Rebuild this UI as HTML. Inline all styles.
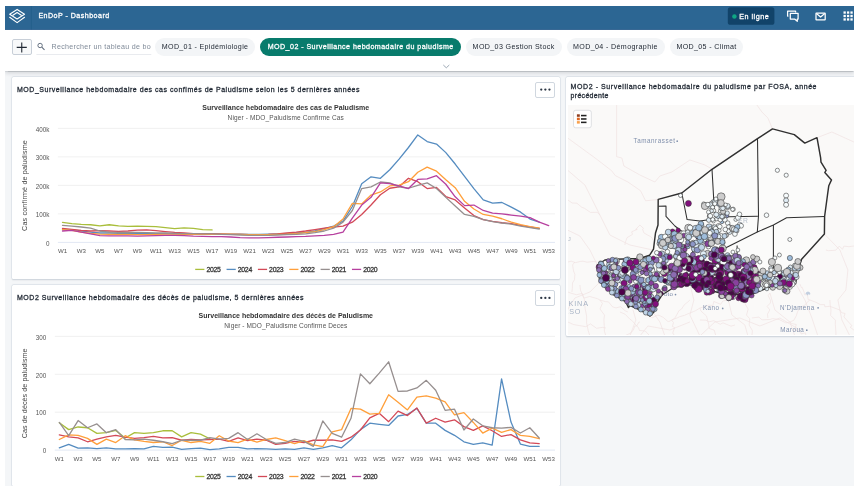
<!DOCTYPE html>
<html><head><meta charset="utf-8"><title>EnDoP - Dashboard</title>
<style>
html,body{margin:0;padding:0;background:#fff;}
body{width:857px;height:496px;overflow:hidden;position:relative;font-family:"Liberation Sans",sans-serif;}
.abs{position:absolute;}
.t{position:absolute;white-space:nowrap;font-family:"Liberation Sans",sans-serif;}
#clip{position:absolute;left:5px;top:5.6px;width:849px;height:480.9px;overflow:hidden;}
#off{position:absolute;left:-5px;top:-5.6px;width:857px;height:496px;will-change:transform;}
#app{position:absolute;left:5px;top:5.6px;width:849px;height:481px;background:#f4f6f8;}
#hdr{position:absolute;left:5px;top:5.6px;width:849px;height:23.9px;background:#2c6693;}
#bar{position:absolute;left:5px;top:29.5px;width:849px;height:41.5px;background:#fff;box-shadow:0 0.5px 1px rgba(33,41,52,.16),0 1.5px 4px rgba(33,41,52,.17);}
.card{position:absolute;background:#fff;border-radius:1.5px;box-shadow:0 0 0 0.5px #d5dde5,0 0.5px 1.5px rgba(64,75,90,.25);}
.chip{position:absolute;top:37.9px;height:18.2px;border-radius:9.1px;background:#f3f5f7;}
.chip.sel{background:#087b6c;}
</style></head><body>
<div id="clip"><div id="off">
<div id="app"></div>

<div class="card" style="left:12.2px;top:77px;width:548.1px;height:201.9px"></div>
<div class="card" style="left:12.2px;top:285px;width:548.1px;height:200.6px"></div>
<div class="card" style="left:565.6px;top:77px;width:292px;height:259.1px"></div>
<div id="bar"></div><div id="hdr"></div>

<svg class="abs" style="left:5px;top:5.6px" width="849" height="24" viewBox="5 5.6 849 24">
 <line x1="31.4" x2="31.4" y1="5.6" y2="29.2" stroke="#1f5a86" stroke-width="0.6"/><rect x="5" y="28.6" width="849" height="0.9" fill="#23598a"/>
 <g fill="none" stroke="#fff" stroke-width="1.15" stroke-linejoin="round" stroke-linecap="round">
  <path d="M17.1 9 L24.5 13.8 L17.1 18.5 L9.7 13.8 Z"/>
  <path d="M12.9 14.9 L17.1 12.1 L21.3 14.9" stroke-width="1.1"/>
  <path d="M9.7 16.9 L17.1 22.2 L24.5 16.9"/>
 </g>
 <rect x="727.8" y="6.8" width="46.6" height="17.6" rx="2.6" fill="#114369"/>
 <circle cx="734.4" cy="16" r="2.25" fill="#10a583"/>
 <g fill="none" stroke="#fff" stroke-width="1.25" stroke-linejoin="round">
  <path d="M788.4 15.6 H787.6 V10.7 H795.6 V12.2"/>
  <path d="M790.3 12.9 H798.1 V18.6 H797.3 V20.9 L794.6 18.6 H790.3 Z"/>
  <rect x="816" y="12.6" width="9.2" height="6.9" rx="0.4"/>
  <path d="M816.4 13.2 L820.6 16.6 L824.8 13.2"/>
 </g>
 <g fill="#fff">
  <rect x="843.50" y="11.00" width="2.3" height="2.3"/><rect x="843.50" y="14.45" width="2.3" height="2.3"/><rect x="843.50" y="17.90" width="2.3" height="2.3"/><rect x="846.95" y="11.00" width="2.3" height="2.3"/><rect x="846.95" y="14.45" width="2.3" height="2.3"/><rect x="846.95" y="17.90" width="2.3" height="2.3"/><rect x="850.40" y="11.00" width="2.3" height="2.3"/><rect x="850.40" y="14.45" width="2.3" height="2.3"/><rect x="850.40" y="17.90" width="2.3" height="2.3"/>
 </g>
</svg>

<div class="t" style="left:38.40px;top:12.34px;font-size:7.1px;line-height:8.52px;letter-spacing:0.464px;color:#fff;-webkit-text-stroke:0.27px #fff;">EnDoP - Dashboard</div>
<div class="t" style="left:739.30px;top:12.58px;font-size:7.2px;line-height:8.64px;letter-spacing:0.485px;color:#fff;-webkit-text-stroke:0.27px #fff;">En ligne</div>

<div class="abs" style="left:11.5px;top:39.1px;width:20px;height:16.4px;box-sizing:border-box;border:0.6px solid #c8cfd8;border-radius:2px;background:#f8f9fa"></div>
<svg class="abs" style="left:5px;top:30px" width="160" height="40" viewBox="5 30 160 40">
 <path d="M16.7 47.4 H26.8 M21.75 42.4 V52.5" stroke="#212934" stroke-width="1.1" fill="none"/>
 <circle cx="40.1" cy="45.5" r="2.2" fill="none" stroke="#5f6b7b" stroke-width="0.95"/>
 <path d="M41.8 47.2 L44.5 49.9" stroke="#5f6b7b" stroke-width="1.05" fill="none"/>
 <line x1="36.4" x2="151.3" y1="54.5" y2="54.5" stroke="#dfe3e8" stroke-width="0.7"/>
</svg>
<div class="abs" style="left:51.5px;top:40px;width:99.8px;height:14px;overflow:hidden"><div class="t" style="left:0;top:3.4px;font-size:7.1px;line-height:8.5px;letter-spacing:0.3px;color:#808b99">Rechercher un tableau de bord</div></div>
<svg class="abs" style="left:440px;top:62px" width="14" height="8" viewBox="440 62 14 8"><path d="M443.3 65 L446.3 67.8 L449.3 65" fill="none" stroke="#8d99a8" stroke-width="0.85"/></svg>

<div class="chip" style="left:154.8px;width:100.3px"></div>
<div class="t" style="left:161.80px;top:42.64px;font-size:7.1px;line-height:8.52px;letter-spacing:0.331px;color:#212934;">MOD_01 - Epidémiologie</div>
<div class="chip sel" style="left:260.2px;width:200.7px"></div>
<div class="t" style="left:267.70px;top:42.64px;font-size:7.1px;line-height:8.52px;letter-spacing:0.450px;color:#fff;-webkit-text-stroke:0.27px #fff;">MOD_02 - Surveillance hebdomadaire du paludisme</div>
<div class="chip" style="left:465.6px;width:96.1px"></div>
<div class="t" style="left:472.60px;top:42.64px;font-size:7.1px;line-height:8.52px;letter-spacing:0.376px;color:#212934;">MOD_03 Gestion Stock</div>
<div class="chip" style="left:566.7px;width:97.9px"></div>
<div class="t" style="left:573.00px;top:42.64px;font-size:7.1px;line-height:8.52px;letter-spacing:0.373px;color:#212934;">MOD_04 - Démographie</div>
<div class="chip" style="left:669.6px;width:73.5px"></div>
<div class="t" style="left:676.40px;top:42.64px;font-size:7.1px;line-height:8.52px;letter-spacing:0.357px;color:#212934;">MOD_05 - Climat</div>
<div class="t" style="left:17.00px;top:86.00px;font-size:7px;line-height:8.40px;letter-spacing:0.524px;color:#212934;-webkit-text-stroke:0.27px #212934;">MOD_Surveillance hebdomadaire des cas confimés de Paludisme selon les 5 dernières années</div>
<div class="t" style="left:17.00px;top:293.60px;font-size:7px;line-height:8.40px;letter-spacing:0.531px;color:#212934;-webkit-text-stroke:0.27px #212934;">MOD2 Surveillance hebdomadaire des décès de paludisme, 5 dernières années</div>
<div class="t" style="left:570.60px;top:83.20px;font-size:7px;line-height:8.40px;letter-spacing:0.577px;color:#212934;-webkit-text-stroke:0.27px #212934;">MOD2 - Surveillance hebdomadaire du paludisme par FOSA, année</div>
<div class="t" style="left:570.60px;top:91.60px;font-size:7px;line-height:8.40px;letter-spacing:0.297px;color:#212934;-webkit-text-stroke:0.27px #212934;">précédente</div>
<div class="abs" style="left:535.3px;top:82.2px;width:19.6px;height:15.4px;border:0.6px solid #d0d7df;border-radius:2px;box-sizing:border-box;background:#fff"></div>
<svg class="abs" style="left:535px;top:82.2px" width="20" height="16" viewBox="0 0 20 16"><circle cx="6.25" cy="7.60" r="1.15" fill="#2c3644"/><circle cx="10.35" cy="7.60" r="1.15" fill="#2c3644"/><circle cx="14.45" cy="7.60" r="1.15" fill="#2c3644"/></svg>
<div class="abs" style="left:535.3px;top:289.5px;width:19.6px;height:16.0px;border:0.6px solid #d0d7df;border-radius:2px;box-sizing:border-box;background:#fff"></div>
<svg class="abs" style="left:535px;top:289.5px" width="20" height="16" viewBox="0 0 20 16"><circle cx="6.25" cy="7.90" r="1.15" fill="#2c3644"/><circle cx="10.35" cy="7.90" r="1.15" fill="#2c3644"/><circle cx="14.45" cy="7.90" r="1.15" fill="#2c3644"/></svg>
<svg class="abs" style="left:13px;top:100px" width="547" height="178" viewBox="13 100 547 178">
<line x1="57.9" x2="555" y1="242.40" y2="242.40" stroke="#ccd6eb" stroke-width="0.6"/>
<text x="49.50" y="246.00" font-size="6.3" fill="#555" text-anchor="end" letter-spacing="0.000" letter-spacing="-0.15">0</text>
<line x1="57.9" x2="555" y1="213.90" y2="213.90" stroke="#e6e6e6" stroke-width="0.6"/>
<text x="49.50" y="217.00" font-size="6.3" fill="#555" text-anchor="end" letter-spacing="0.000" letter-spacing="-0.15">100k</text>
<line x1="57.9" x2="555" y1="185.40" y2="185.40" stroke="#e6e6e6" stroke-width="0.6"/>
<text x="49.50" y="189.00" font-size="6.3" fill="#555" text-anchor="end" letter-spacing="0.000" letter-spacing="-0.15">200k</text>
<line x1="57.9" x2="555" y1="156.90" y2="156.90" stroke="#e6e6e6" stroke-width="0.6"/>
<text x="49.50" y="160.00" font-size="6.3" fill="#555" text-anchor="end" letter-spacing="0.000" letter-spacing="-0.15">300k</text>
<line x1="57.9" x2="555" y1="128.40" y2="128.40" stroke="#e6e6e6" stroke-width="0.6"/>
<text x="49.50" y="132.00" font-size="6.3" fill="#555" text-anchor="end" letter-spacing="0.000" letter-spacing="-0.15">400k</text>
<text x="62.50" y="253.00" font-size="6.1" fill="#555" text-anchor="middle" letter-spacing="0.000" letter-spacing="-0.1">W1</text>
<text x="81.20" y="253.00" font-size="6.1" fill="#555" text-anchor="middle" letter-spacing="0.000" letter-spacing="-0.1">W3</text>
<text x="99.90" y="253.00" font-size="6.1" fill="#555" text-anchor="middle" letter-spacing="0.000" letter-spacing="-0.1">W5</text>
<text x="118.60" y="253.00" font-size="6.1" fill="#555" text-anchor="middle" letter-spacing="0.000" letter-spacing="-0.1">W7</text>
<text x="137.30" y="253.00" font-size="6.1" fill="#555" text-anchor="middle" letter-spacing="0.000" letter-spacing="-0.1">W9</text>
<text x="156.00" y="253.00" font-size="6.1" fill="#555" text-anchor="middle" letter-spacing="0.000" letter-spacing="-0.1">W11</text>
<text x="174.70" y="253.00" font-size="6.1" fill="#555" text-anchor="middle" letter-spacing="0.000" letter-spacing="-0.1">W13</text>
<text x="193.40" y="253.00" font-size="6.1" fill="#555" text-anchor="middle" letter-spacing="0.000" letter-spacing="-0.1">W15</text>
<text x="212.10" y="253.00" font-size="6.1" fill="#555" text-anchor="middle" letter-spacing="0.000" letter-spacing="-0.1">W17</text>
<text x="230.80" y="253.00" font-size="6.1" fill="#555" text-anchor="middle" letter-spacing="0.000" letter-spacing="-0.1">W19</text>
<text x="249.50" y="253.00" font-size="6.1" fill="#555" text-anchor="middle" letter-spacing="0.000" letter-spacing="-0.1">W21</text>
<text x="268.20" y="253.00" font-size="6.1" fill="#555" text-anchor="middle" letter-spacing="0.000" letter-spacing="-0.1">W23</text>
<text x="286.90" y="253.00" font-size="6.1" fill="#555" text-anchor="middle" letter-spacing="0.000" letter-spacing="-0.1">W25</text>
<text x="305.60" y="253.00" font-size="6.1" fill="#555" text-anchor="middle" letter-spacing="0.000" letter-spacing="-0.1">W27</text>
<text x="324.30" y="253.00" font-size="6.1" fill="#555" text-anchor="middle" letter-spacing="0.000" letter-spacing="-0.1">W29</text>
<text x="343.00" y="253.00" font-size="6.1" fill="#555" text-anchor="middle" letter-spacing="0.000" letter-spacing="-0.1">W31</text>
<text x="361.70" y="253.00" font-size="6.1" fill="#555" text-anchor="middle" letter-spacing="0.000" letter-spacing="-0.1">W33</text>
<text x="380.40" y="253.00" font-size="6.1" fill="#555" text-anchor="middle" letter-spacing="0.000" letter-spacing="-0.1">W35</text>
<text x="399.10" y="253.00" font-size="6.1" fill="#555" text-anchor="middle" letter-spacing="0.000" letter-spacing="-0.1">W37</text>
<text x="417.80" y="253.00" font-size="6.1" fill="#555" text-anchor="middle" letter-spacing="0.000" letter-spacing="-0.1">W39</text>
<text x="436.50" y="253.00" font-size="6.1" fill="#555" text-anchor="middle" letter-spacing="0.000" letter-spacing="-0.1">W41</text>
<text x="455.20" y="253.00" font-size="6.1" fill="#555" text-anchor="middle" letter-spacing="0.000" letter-spacing="-0.1">W43</text>
<text x="473.90" y="253.00" font-size="6.1" fill="#555" text-anchor="middle" letter-spacing="0.000" letter-spacing="-0.1">W45</text>
<text x="492.60" y="253.00" font-size="6.1" fill="#555" text-anchor="middle" letter-spacing="0.000" letter-spacing="-0.1">W47</text>
<text x="511.30" y="253.00" font-size="6.1" fill="#555" text-anchor="middle" letter-spacing="0.000" letter-spacing="-0.1">W49</text>
<text x="530.00" y="253.00" font-size="6.1" fill="#555" text-anchor="middle" letter-spacing="0.000" letter-spacing="-0.1">W51</text>
<text x="548.70" y="253.00" font-size="6.1" fill="#555" text-anchor="middle" letter-spacing="0.000" letter-spacing="-0.1">W53</text>
<polyline points="62.50,222.45 71.85,223.59 81.20,224.44 90.55,224.73 99.90,225.87 109.25,224.73 118.60,225.87 127.95,226.44 137.30,226.16 146.65,226.44 156.00,226.72 165.35,227.58 174.70,228.72 184.05,227.87 193.40,228.44 202.75,229.58 212.10,229.86" fill="none" stroke="#a9be3b" stroke-width="1.3" stroke-linejoin="round" stroke-linecap="round"/>
<polyline points="62.50,229.58 71.85,229.86 81.20,231.00 90.55,232.14 99.90,233.00 109.25,233.00 118.60,233.28 127.95,233.28 137.30,233.28 146.65,233.28 156.00,233.56 165.35,233.56 174.70,233.85 184.05,233.85 193.40,233.85 202.75,233.85 212.10,233.56 221.45,233.85 230.80,234.14 240.15,234.14 249.50,234.42 258.85,234.42 268.20,234.14 277.55,233.85 286.90,233.56 296.25,233.00 305.60,232.43 314.95,231.00 324.30,228.72 333.65,226.16 343.00,221.03 352.35,206.49 361.70,183.69 371.05,176.85 380.40,178.28 389.75,169.73 399.10,159.18 408.45,147.50 417.80,134.96 427.15,141.51 436.50,144.08 445.85,152.62 455.20,164.03 464.55,176.28 473.90,188.54 483.25,199.94 492.60,203.07 501.95,202.50 511.30,207.06 520.65,212.19 530.00,219.03 539.35,222.17" fill="none" stroke="#558cc0" stroke-width="1.3" stroke-linejoin="round" stroke-linecap="round"/>
<polyline points="62.50,228.44 71.85,229.29 81.20,230.43 90.55,231.00 99.90,230.72 109.25,231.00 118.60,231.28 127.95,231.00 137.30,230.15 146.65,229.86 156.00,230.72 165.35,231.57 174.70,232.43 184.05,233.00 193.40,233.56 202.75,233.85 212.10,233.85 221.45,234.14 230.80,234.42 240.15,234.42 249.50,234.71 258.85,234.71 268.20,234.42 277.55,233.85 286.90,233.00 296.25,232.14 305.60,231.00 314.95,229.58 324.30,228.15 333.65,227.01 343.00,226.16 352.35,222.17 361.70,214.47 371.05,205.06 380.40,194.81 389.75,188.25 399.10,186.83 408.45,178.28 417.80,181.69 427.15,188.54 436.50,187.40 445.85,196.52 455.20,199.94 464.55,207.92 473.90,215.61 483.25,219.60 492.60,221.31 501.95,222.74 511.30,223.59 520.65,225.30 530.00,227.01 539.35,228.44" fill="none" stroke="#d34957" stroke-width="1.3" stroke-linejoin="round" stroke-linecap="round"/>
<polyline points="62.50,229.58 71.85,230.43 81.20,232.14 90.55,233.28 99.90,234.14 109.25,234.42 118.60,234.42 127.95,234.42 137.30,234.71 146.65,234.71 156.00,234.42 165.35,234.14 174.70,234.14 184.05,234.42 193.40,234.42 202.75,234.42 212.10,234.42 221.45,234.14 230.80,234.14 240.15,234.42 249.50,234.71 258.85,234.71 268.20,234.71 277.55,234.42 286.90,234.14 296.25,233.56 305.60,232.71 314.95,231.57 324.30,229.58 333.65,226.72 343.00,219.03 352.35,203.36 361.70,203.93 371.05,195.09 380.40,191.96 389.75,185.97 399.10,185.12 408.45,181.69 417.80,172.29 427.15,167.16 436.50,171.15 445.85,179.70 455.20,187.68 464.55,201.36 473.90,209.06 483.25,214.47 492.60,216.18 501.95,218.75 511.30,222.17 520.65,224.73 530.00,226.72 539.35,228.15" fill="none" stroke="#ff9f3a" stroke-width="1.3" stroke-linejoin="round" stroke-linecap="round"/>
<polyline points="62.50,225.30 71.85,226.16 81.20,227.01 90.55,228.15 99.90,231.00 109.25,232.14 118.60,232.43 127.95,232.43 137.30,232.43 146.65,232.71 156.00,233.00 165.35,233.00 174.70,233.28 184.05,233.56 193.40,233.56 202.75,233.85 212.10,233.85 221.45,234.42 230.80,234.71 240.15,234.99 249.50,235.28 258.85,235.28 268.20,235.28 277.55,234.99 286.90,234.71 296.25,234.42 305.60,233.85 314.95,232.71 324.30,231.00 333.65,228.15 343.00,222.17 352.35,210.48 361.70,188.54 371.05,186.83 380.40,181.98 389.75,182.84 399.10,186.83 408.45,188.25 417.80,185.40 427.15,182.84 436.50,188.54 445.85,197.37 455.20,205.92 464.55,214.47 473.90,216.47 483.25,219.60 492.60,221.59 501.95,223.02 511.30,224.16 520.65,226.16 530.00,227.58 539.35,229.00" fill="none" stroke="#968f8f" stroke-width="1.3" stroke-linejoin="round" stroke-linecap="round"/>
<polyline points="62.50,231.00 71.85,230.43 81.20,232.14 90.55,233.85 99.90,235.56 109.25,235.84 118.60,235.84 127.95,235.84 137.30,236.13 146.65,235.84 156.00,235.56 165.35,235.28 174.70,235.28 184.05,235.56 193.40,236.13 202.75,236.42 212.10,236.70 221.45,236.70 230.80,236.99 240.15,237.56 249.50,237.84 258.85,237.84 268.20,237.56 277.55,237.27 286.90,236.99 296.25,236.70 305.60,236.42 314.95,235.84 324.30,235.28 333.65,234.42 343.00,232.14 352.35,218.18 361.70,205.06 371.05,197.37 380.40,182.84 389.75,183.69 399.10,185.97 408.45,188.54 417.80,179.42 427.15,178.85 436.50,175.71 445.85,184.26 455.20,196.80 464.55,205.64 473.90,205.06 483.25,210.48 492.60,213.05 501.95,213.90 511.30,215.04 520.65,216.18 530.00,217.61 539.35,222.17 548.70,225.59" fill="none" stroke="#b7409f" stroke-width="1.3" stroke-linejoin="round" stroke-linecap="round"/>
<text x="202.30" y="110.00" font-size="7.0" fill="#333" text-anchor="start" font-weight="bold" letter-spacing="0.027" >Surveillance hebdomadaire des cas de Paludisme</text>
<text x="227.60" y="120.00" font-size="6.5" fill="#555" text-anchor="start" letter-spacing="0.130" >Niger - MDO_Paludisme Confirme Cas</text>
<text transform="translate(26.6,230.90) rotate(-90)" font-size="7.2" fill="#444" letter-spacing="0.150">Cas confirmé de paludisme</text>
<line x1="195.20" x2="204.40" y1="269.4" y2="269.4" stroke="#a9be3b" stroke-width="1.3"/>
<text x="206.40" y="272.00" font-size="6.9" fill="#333" text-anchor="start" letter-spacing="-0.288" stroke="#333" stroke-width="0.27">2025</text>
<line x1="226.55" x2="235.75" y1="269.4" y2="269.4" stroke="#558cc0" stroke-width="1.3"/>
<text x="237.75" y="272.00" font-size="6.9" fill="#333" text-anchor="start" letter-spacing="-0.288" stroke="#333" stroke-width="0.27">2024</text>
<line x1="257.90" x2="267.10" y1="269.4" y2="269.4" stroke="#d34957" stroke-width="1.3"/>
<text x="269.10" y="272.00" font-size="6.9" fill="#333" text-anchor="start" letter-spacing="-0.288" stroke="#333" stroke-width="0.27">2023</text>
<line x1="289.25" x2="298.45" y1="269.4" y2="269.4" stroke="#ff9f3a" stroke-width="1.3"/>
<text x="300.45" y="272.00" font-size="6.9" fill="#333" text-anchor="start" letter-spacing="-0.288" stroke="#333" stroke-width="0.27">2022</text>
<line x1="320.60" x2="329.80" y1="269.4" y2="269.4" stroke="#968f8f" stroke-width="1.3"/>
<text x="331.80" y="272.00" font-size="6.9" fill="#333" text-anchor="start" letter-spacing="-0.288" stroke="#333" stroke-width="0.27">2021</text>
<line x1="351.95" x2="361.15" y1="269.4" y2="269.4" stroke="#b7409f" stroke-width="1.3"/>
<text x="363.15" y="272.00" font-size="6.9" fill="#333" text-anchor="start" letter-spacing="-0.288" stroke="#333" stroke-width="0.27">2020</text>
</svg>
<svg class="abs" style="left:13px;top:308px" width="547" height="178" viewBox="13 308 547 178">
<line x1="54.8" x2="555" y1="450.10" y2="450.10" stroke="#ccd6eb" stroke-width="0.6"/>
<text x="46.20" y="453.00" font-size="6.3" fill="#555" text-anchor="end" letter-spacing="0.000" letter-spacing="-0.15">0</text>
<line x1="54.8" x2="555" y1="412.20" y2="412.20" stroke="#e6e6e6" stroke-width="0.6"/>
<text x="46.20" y="415.00" font-size="6.3" fill="#555" text-anchor="end" letter-spacing="0.000" letter-spacing="-0.15">100</text>
<line x1="54.8" x2="555" y1="374.30" y2="374.30" stroke="#e6e6e6" stroke-width="0.6"/>
<text x="46.20" y="378.00" font-size="6.3" fill="#555" text-anchor="end" letter-spacing="0.000" letter-spacing="-0.15">200</text>
<line x1="54.8" x2="555" y1="336.40" y2="336.40" stroke="#e6e6e6" stroke-width="0.6"/>
<text x="46.20" y="340.00" font-size="6.3" fill="#555" text-anchor="end" letter-spacing="0.000" letter-spacing="-0.15">300</text>
<text x="59.30" y="461.00" font-size="6.1" fill="#555" text-anchor="middle" letter-spacing="0.000" letter-spacing="-0.1">W1</text>
<text x="78.12" y="461.00" font-size="6.1" fill="#555" text-anchor="middle" letter-spacing="0.000" letter-spacing="-0.1">W3</text>
<text x="96.94" y="461.00" font-size="6.1" fill="#555" text-anchor="middle" letter-spacing="0.000" letter-spacing="-0.1">W5</text>
<text x="115.76" y="461.00" font-size="6.1" fill="#555" text-anchor="middle" letter-spacing="0.000" letter-spacing="-0.1">W7</text>
<text x="134.58" y="461.00" font-size="6.1" fill="#555" text-anchor="middle" letter-spacing="0.000" letter-spacing="-0.1">W9</text>
<text x="153.40" y="461.00" font-size="6.1" fill="#555" text-anchor="middle" letter-spacing="0.000" letter-spacing="-0.1">W11</text>
<text x="172.22" y="461.00" font-size="6.1" fill="#555" text-anchor="middle" letter-spacing="0.000" letter-spacing="-0.1">W13</text>
<text x="191.04" y="461.00" font-size="6.1" fill="#555" text-anchor="middle" letter-spacing="0.000" letter-spacing="-0.1">W15</text>
<text x="209.86" y="461.00" font-size="6.1" fill="#555" text-anchor="middle" letter-spacing="0.000" letter-spacing="-0.1">W17</text>
<text x="228.68" y="461.00" font-size="6.1" fill="#555" text-anchor="middle" letter-spacing="0.000" letter-spacing="-0.1">W19</text>
<text x="247.50" y="461.00" font-size="6.1" fill="#555" text-anchor="middle" letter-spacing="0.000" letter-spacing="-0.1">W21</text>
<text x="266.32" y="461.00" font-size="6.1" fill="#555" text-anchor="middle" letter-spacing="0.000" letter-spacing="-0.1">W23</text>
<text x="285.14" y="461.00" font-size="6.1" fill="#555" text-anchor="middle" letter-spacing="0.000" letter-spacing="-0.1">W25</text>
<text x="303.96" y="461.00" font-size="6.1" fill="#555" text-anchor="middle" letter-spacing="0.000" letter-spacing="-0.1">W27</text>
<text x="322.78" y="461.00" font-size="6.1" fill="#555" text-anchor="middle" letter-spacing="0.000" letter-spacing="-0.1">W29</text>
<text x="341.60" y="461.00" font-size="6.1" fill="#555" text-anchor="middle" letter-spacing="0.000" letter-spacing="-0.1">W31</text>
<text x="360.42" y="461.00" font-size="6.1" fill="#555" text-anchor="middle" letter-spacing="0.000" letter-spacing="-0.1">W33</text>
<text x="379.24" y="461.00" font-size="6.1" fill="#555" text-anchor="middle" letter-spacing="0.000" letter-spacing="-0.1">W35</text>
<text x="398.06" y="461.00" font-size="6.1" fill="#555" text-anchor="middle" letter-spacing="0.000" letter-spacing="-0.1">W37</text>
<text x="416.88" y="461.00" font-size="6.1" fill="#555" text-anchor="middle" letter-spacing="0.000" letter-spacing="-0.1">W39</text>
<text x="435.70" y="461.00" font-size="6.1" fill="#555" text-anchor="middle" letter-spacing="0.000" letter-spacing="-0.1">W41</text>
<text x="454.52" y="461.00" font-size="6.1" fill="#555" text-anchor="middle" letter-spacing="0.000" letter-spacing="-0.1">W43</text>
<text x="473.34" y="461.00" font-size="6.1" fill="#555" text-anchor="middle" letter-spacing="0.000" letter-spacing="-0.1">W45</text>
<text x="492.16" y="461.00" font-size="6.1" fill="#555" text-anchor="middle" letter-spacing="0.000" letter-spacing="-0.1">W47</text>
<text x="510.98" y="461.00" font-size="6.1" fill="#555" text-anchor="middle" letter-spacing="0.000" letter-spacing="-0.1">W49</text>
<text x="529.80" y="461.00" font-size="6.1" fill="#555" text-anchor="middle" letter-spacing="0.000" letter-spacing="-0.1">W51</text>
<text x="548.62" y="461.00" font-size="6.1" fill="#555" text-anchor="middle" letter-spacing="0.000" letter-spacing="-0.1">W53</text>
<polyline points="59.30,422.81 68.71,429.63 78.12,426.98 87.53,427.74 96.94,433.42 106.35,432.67 115.76,430.39 125.17,437.97 134.58,432.67 143.99,433.42 153.40,432.67 162.81,430.77 172.22,430.77 181.63,436.84 191.04,432.67 200.45,434.18 209.86,438.73" fill="none" stroke="#a9be3b" stroke-width="1.3" stroke-linejoin="round" stroke-linecap="round"/>
<polyline points="59.30,447.83 68.71,444.42 78.12,448.21 87.53,447.83 96.94,448.58 106.35,447.83 115.76,448.96 125.17,448.96 134.58,448.58 143.99,448.96 153.40,446.31 162.81,447.45 172.22,447.07 181.63,449.34 191.04,448.58 200.45,448.21 209.86,449.72 219.27,448.96 228.68,447.45 238.09,447.45 247.50,448.96 256.91,448.58 266.32,448.96 275.73,449.34 285.14,448.96 294.55,449.34 303.96,447.83 313.37,449.34 322.78,447.83 332.19,445.55 341.60,447.83 351.01,439.87 360.42,429.63 369.83,423.19 379.24,424.33 388.65,425.47 398.06,415.99 407.47,414.47 416.88,408.41 426.29,423.19 435.70,423.19 445.11,430.39 454.52,435.32 463.93,441.76 473.34,444.42 482.75,442.90 492.16,445.17 501.57,378.85 510.98,422.05 520.39,444.04 529.80,446.31 539.21,446.31" fill="none" stroke="#558cc0" stroke-width="1.3" stroke-linejoin="round" stroke-linecap="round"/>
<polyline points="59.30,434.94 68.71,436.84 78.12,437.97 87.53,441.76 96.94,439.11 106.35,436.84 115.76,435.32 125.17,437.21 134.58,438.35 143.99,437.59 153.40,436.46 162.81,437.97 172.22,437.59 181.63,440.25 191.04,439.49 200.45,439.87 209.86,439.49 219.27,439.11 228.68,441.38 238.09,437.97 247.50,440.62 256.91,439.11 266.32,440.25 275.73,444.42 285.14,443.28 294.55,441.38 303.96,442.52 313.37,440.25 322.78,440.25 332.19,439.87 341.60,441.38 351.01,437.21 360.42,430.01 369.83,417.88 379.24,413.34 388.65,421.68 398.06,411.06 407.47,415.61 416.88,408.03 426.29,423.19 435.70,418.26 445.11,422.05 454.52,419.78 463.93,426.60 473.34,430.39 482.75,425.84 492.16,430.77 501.57,436.46 510.98,434.56 520.39,439.87 529.80,442.90 539.21,443.66" fill="none" stroke="#d34957" stroke-width="1.3" stroke-linejoin="round" stroke-linecap="round"/>
<polyline points="59.30,439.49 68.71,434.94 78.12,435.32 87.53,438.35 96.94,444.42 106.35,439.11 115.76,442.52 125.17,435.70 134.58,439.87 143.99,441.38 153.40,442.52 162.81,441.76 172.22,445.55 181.63,440.25 191.04,442.52 200.45,441.38 209.86,443.28 219.27,435.70 228.68,441.00 238.09,442.52 247.50,439.11 256.91,442.14 266.32,439.49 275.73,437.97 285.14,440.62 294.55,443.66 303.96,440.62 313.37,444.79 322.78,446.69 332.19,431.91 341.60,429.63 351.01,408.41 360.42,409.17 369.83,414.10 379.24,413.34 388.65,394.77 398.06,402.35 407.47,409.93 416.88,397.04 426.29,395.90 435.70,398.18 445.11,401.97 454.52,414.85 463.93,412.58 473.34,422.43 482.75,433.05 492.16,428.12 501.57,432.29 510.98,429.63 520.39,435.32 529.80,436.46 539.21,438.73" fill="none" stroke="#ff9f3a" stroke-width="1.3" stroke-linejoin="round" stroke-linecap="round"/>
<polyline points="59.30,422.43 68.71,435.70 78.12,420.54 87.53,427.74 96.94,423.95 106.35,432.67 115.76,429.63 125.17,439.49 134.58,439.87 143.99,439.11 153.40,440.25 162.81,441.76 172.22,443.66 181.63,440.25 191.04,440.25 200.45,440.25 209.86,437.59 219.27,439.11 228.68,438.35 238.09,432.67 247.50,439.49 256.91,433.80 266.32,439.49 275.73,443.28 285.14,442.52 294.55,439.11 303.96,441.38 313.37,446.31 322.78,420.92 332.19,433.42 341.60,437.21 351.01,418.26 360.42,373.92 369.83,383.78 379.24,373.16 388.65,361.79 398.06,391.36 407.47,390.98 416.88,387.94 426.29,380.36 435.70,390.22 445.11,410.31 454.52,409.17 463.93,430.01 473.34,419.02 482.75,425.84 492.16,427.74 501.57,428.12 510.98,427.36 520.39,433.05 529.80,427.74 539.21,437.97" fill="none" stroke="#968f8f" stroke-width="1.3" stroke-linejoin="round" stroke-linecap="round"/>
<text x="198.55" y="318.00" font-size="7.0" fill="#333" text-anchor="start" font-weight="bold" letter-spacing="0.012" >Surveillance hebdomadaire des décès de Paludisme</text>
<text x="224.30" y="328.00" font-size="6.5" fill="#555" text-anchor="start" letter-spacing="0.115" >Niger - MDO_Paludisme Confirme Deces</text>
<text transform="translate(26.6,438.25) rotate(-90)" font-size="7.2" fill="#444" letter-spacing="0.046">Cas de décès de paludisme</text>
<line x1="195.20" x2="204.40" y1="476.5" y2="476.5" stroke="#a9be3b" stroke-width="1.3"/>
<text x="206.40" y="479.00" font-size="6.9" fill="#333" text-anchor="start" letter-spacing="-0.288" stroke="#333" stroke-width="0.27">2025</text>
<line x1="226.55" x2="235.75" y1="476.5" y2="476.5" stroke="#558cc0" stroke-width="1.3"/>
<text x="237.75" y="479.00" font-size="6.9" fill="#333" text-anchor="start" letter-spacing="-0.288" stroke="#333" stroke-width="0.27">2024</text>
<line x1="257.90" x2="267.10" y1="476.5" y2="476.5" stroke="#d34957" stroke-width="1.3"/>
<text x="269.10" y="479.00" font-size="6.9" fill="#333" text-anchor="start" letter-spacing="-0.288" stroke="#333" stroke-width="0.27">2023</text>
<line x1="289.25" x2="298.45" y1="476.5" y2="476.5" stroke="#ff9f3a" stroke-width="1.3"/>
<text x="300.45" y="479.00" font-size="6.9" fill="#333" text-anchor="start" letter-spacing="-0.288" stroke="#333" stroke-width="0.27">2022</text>
<line x1="320.60" x2="329.80" y1="476.5" y2="476.5" stroke="#968f8f" stroke-width="1.3"/>
<text x="331.80" y="479.00" font-size="6.9" fill="#333" text-anchor="start" letter-spacing="-0.288" stroke="#333" stroke-width="0.27">2021</text>
<line x1="351.95" x2="361.15" y1="476.5" y2="476.5" stroke="#b7409f" stroke-width="1.3"/>
<text x="363.15" y="479.00" font-size="6.9" fill="#333" text-anchor="start" letter-spacing="-0.288" stroke="#333" stroke-width="0.27">2020</text>
</svg>
<svg class="abs" style="left:568.1px;top:105.0px" width="286" height="229.8" viewBox="568.1 105.0 286 229.8">
<rect x="568.1" y="105.0" width="286" height="229.8" fill="#faf9f8"/>
<path d="M567.5,137.8 L595.2,158 L611.6,170.6 L615.4,175.6 L628,182 L640.6,190.7 L645.7,200.8 L658,199.5" fill="none" stroke="#f0e0e0" stroke-width="0.65"/>
<path d="M616.7,104.6 L616.7,156.7 L622,158 L624,166 L640,175 L655,182 L660,176 L672,172 L690,160 L705,165 L712,169" fill="none" stroke="#f0e0e0" stroke-width="0.65"/>
<path d="M772.6,128.9 L768,118 L762,112 L757,105" fill="none" stroke="#f0e0e0" stroke-width="0.65"/>
<path d="M817.1,137.7 L832,132 L854,142" fill="none" stroke="#f0e0e0" stroke-width="0.65"/>
<path d="M824.5,234 L840,250 L848,270 L846,290 L838,300 L842,320 L850,336" fill="none" stroke="#f0e0e0" stroke-width="0.65"/>
<path d="M796,284 L805,300 L812,318 L818,336" fill="none" stroke="#f0e0e0" stroke-width="0.65"/>
<path d="M567.5,230 L580,236 L590,250 L597.5,265" fill="none" stroke="#f0e0e0" stroke-width="0.65"/>
<path d="M600,282 L590,292 L575,298 L567.5,310" fill="none" stroke="#f0e0e0" stroke-width="0.65"/>
<path d="M633,309.5 L636,320 L630,336" fill="none" stroke="#f0e0e0" stroke-width="0.65"/>
<path d="M653,312 L660,322 L665,336" fill="none" stroke="#f0e0e0" stroke-width="0.65"/>
<path d="M690,284 L694,300 L690,315 L700,336" fill="none" stroke="#f0e0e0" stroke-width="0.65"/>
<path d="M728,298 L732,315 L745,325 L748,336" fill="none" stroke="#f0e0e0" stroke-width="0.65"/>
<path d="M770,293 L775,310 L790,322 L795,336" fill="none" stroke="#f0e0e0" stroke-width="0.65"/>
<path d="M567.5,170 L585,185 L600,215 L610,235 L630,245 L653,250" fill="none" stroke="#f0e0e0" stroke-width="0.65"/>
<path d="M700,336 L715,322 L740,318 L760,326 L780,318 L800,330" fill="none" stroke="#f0e0e0" stroke-width="0.65"/>
<path d="M640,336 L648,326 L670,330 L690,322" fill="none" stroke="#f0e0e0" stroke-width="0.65"/>
<path d="M568.0,292.0 L571.4,293.3 L576.6,294.7 L582.3,293.5 L584.1,298.1 L589.8,296.5 L597.6,298.7 L600.0,300.0" fill="none" stroke="#f0e0e0" stroke-width="0.65"/>
<path d="M600.0,300.0 L605.5,301.6 L608.6,301.9 L612.6,306.8 L616.1,307.9 L620.8,306.7 L625.1,310.7 L628.0,312.0" fill="none" stroke="#f0e0e0" stroke-width="0.65"/>
<path d="M580.0,285.0 L580.6,290.2 L584.5,299.5 L585.2,308.5 L586.7,316.0 L586.7,322.8 L588.3,330.6 L590.0,336.0" fill="none" stroke="#f0e0e0" stroke-width="0.65"/>
<path d="M600.0,300.0 L602.5,303.4 L600.1,309.0 L604.6,315.1 L604.0,319.7 L604.3,325.2 L604.5,331.2 L606.0,336.0" fill="none" stroke="#f0e0e0" stroke-width="0.65"/>
<path d="M568.0,322.0 L573.8,324.6 L579.7,325.6 L585.9,326.7 L590.5,323.9 L596.7,328.3 L602.4,327.4 L606.0,328.0" fill="none" stroke="#f0e0e0" stroke-width="0.65"/>
<path d="M620.0,312.0 L625.2,314.2 L630.0,319.2 L631.9,320.4 L638.7,327.9 L639.6,330.5 L645.3,331.0 L650.0,336.0" fill="none" stroke="#f0e0e0" stroke-width="0.65"/>
<path d="M650.0,316.0 L652.2,317.8 L657.9,315.1 L659.9,315.7 L663.5,317.5 L667.4,321.0 L668.9,321.6 L672.0,320.0" fill="none" stroke="#f0e0e0" stroke-width="0.65"/>
<path d="M672.0,320.0 L671.7,320.4 L673.6,322.5 L672.4,326.5 L674.8,327.6 L672.8,333.0 L674.6,335.7 L676.0,336.0" fill="none" stroke="#f0e0e0" stroke-width="0.65"/>
<path d="M672.0,320.0 L677.7,317.7 L679.8,316.7 L684.6,315.3 L688.3,313.7 L693.9,311.5 L695.7,310.7 L700.0,308.0" fill="none" stroke="#f0e0e0" stroke-width="0.65"/>
<path d="M700.0,308.0 L701.1,311.1 L706.7,316.1 L707.1,317.9 L708.8,324.4 L709.3,328.5 L714.3,330.1 L716.0,336.0" fill="none" stroke="#f0e0e0" stroke-width="0.65"/>
<path d="M700.0,308.0 L704.6,306.7 L708.8,305.1 L712.9,305.6 L713.9,301.5 L720.8,304.3 L722.9,301.0 L728.0,300.0" fill="none" stroke="#f0e0e0" stroke-width="0.65"/>
<path d="M690.0,300.0 L687.8,302.1 L684.3,304.9 L681.7,309.0 L678.8,310.9 L678.3,312.2 L674.9,318.2 L672.0,320.0" fill="none" stroke="#f0e0e0" stroke-width="0.65"/>
<path d="M745.0,300.0 L745.2,303.9 L748.3,309.1 L746.6,315.1 L749.9,318.8 L749.2,325.0 L752.5,330.6 L752.0,336.0" fill="none" stroke="#f0e0e0" stroke-width="0.65"/>
<path d="M752.0,318.0 L759.0,317.1 L762.1,319.8 L770.0,319.5 L772.5,318.6 L779.3,319.5 L785.9,322.9 L790.0,322.0" fill="none" stroke="#f0e0e0" stroke-width="0.65"/>
<path d="M770.0,293.0 L768.3,295.6 L770.8,300.8 L770.5,303.0 L767.2,306.4 L769.9,309.9 L767.6,314.1 L768.0,318.0" fill="none" stroke="#f0e0e0" stroke-width="0.65"/>
<path d="M790.0,322.0 L791.9,323.6 L796.4,324.5 L794.7,330.0 L800.8,332.1 L801.1,334.0 L805.6,332.8 L806.0,336.0" fill="none" stroke="#f0e0e0" stroke-width="0.65"/>
<path d="M790.0,322.0 L793.9,320.3 L796.4,315.8 L797.6,311.9 L800.2,307.5 L804.7,305.3 L808.5,301.1 L810.0,300.0" fill="none" stroke="#f0e0e0" stroke-width="0.65"/>
<path d="M810.0,300.0 L816.1,302.3 L820.4,304.6 L824.6,304.6 L825.0,306.8 L830.0,306.3 L836.4,308.7 L840.0,310.0" fill="none" stroke="#f0e0e0" stroke-width="0.65"/>
<path d="M810.0,300.0 L808.2,299.6 L807.6,294.7 L804.6,294.7 L804.2,292.1 L802.2,287.2 L801.6,287.7 L800.0,284.0" fill="none" stroke="#f0e0e0" stroke-width="0.65"/>
<path d="M826.0,250.0 L828.6,250.7 L835.9,250.2 L839.4,246.1 L842.6,249.3 L844.0,246.1 L849.0,246.7 L854.0,246.0" fill="none" stroke="#f0e0e0" stroke-width="0.65"/>
<path d="M840.0,310.0 L841.7,312.7 L845.2,313.5 L844.0,316.9 L846.3,319.5 L852.1,325.8 L850.2,327.2 L854.0,330.0" fill="none" stroke="#f0e0e0" stroke-width="0.65"/>
<path d="M568.0,262.0 L571.3,261.2 L575.6,262.6 L580.8,261.4 L583.2,261.2 L587.1,262.2 L593.8,261.5 L597.0,262.0" fill="none" stroke="#f0e0e0" stroke-width="0.65"/>
<path d="M575.0,262.0 L572.7,264.9 L573.6,271.0 L575.0,274.3 L574.6,279.7 L572.6,282.9 L572.4,288.6 L572.0,292.0" fill="none" stroke="#f0e0e0" stroke-width="0.65"/>
<path d="M568.0,200.0 L572.2,203.0 L577.0,203.2 L581.9,207.3 L584.4,208.2 L590.5,212.4 L597.3,212.3 L600.0,215.0" fill="none" stroke="#f0e0e0" stroke-width="0.65"/>
<path d="M640.0,225.0 L643.6,228.4 L642.7,229.1 L643.9,232.8 L648.1,235.3 L650.6,236.5 L652.2,238.1 L653.0,240.0" fill="none" stroke="#f0e0e0" stroke-width="0.65"/>
<path d="M625.0,245.0 L625.4,242.5 L627.1,237.7 L632.6,234.4 L631.8,231.8 L637.4,229.3 L635.8,229.4 L640.0,225.0" fill="none" stroke="#f0e0e0" stroke-width="0.65"/>
<path d="M625.0,336.0 L625.5,335.5 L630.0,333.5 L633.4,330.3 L634.9,326.0 L636.9,326.0 L638.8,322.3 L640.0,322.0" fill="none" stroke="#f0e0e0" stroke-width="0.65"/>
<path d="M735.0,325.0 L731.1,326.2 L723.1,322.8 L720.3,324.3 L713.9,320.7 L708.9,321.9 L706.1,320.2 L700.0,320.0" fill="none" stroke="#f0e0e0" stroke-width="0.65"/>
<path d="M830.0,300.0 L830.3,304.7 L831.1,309.9 L830.7,315.4 L835.5,320.2 L835.4,324.2 L836.0,332.0 L836.0,336.0" fill="none" stroke="#f0e0e0" stroke-width="0.65"/>
<path d="M658.3,199.4 L681.9,193 L712.1,169.3 L757.6,138.6 L772.6,128.9 L794.4,134.6 L804.9,143.1 L817.1,137.7 L820.7,157.6 L821.1,162.1 L826.2,170.3 L824.9,172.5 L831.6,179.9 L828.9,185.7 L827.6,195 L824.7,216.5 L824.5,234 L801.7,259.3 L797.7,271.4 L795.7,283.5 L786,287 L770,287 L752,294 L728,295 L705,289 L690,284 L673,288 L662,295 L657,303 L654,312 L650,316 L644,312 L636,308 L630,305.5 L628.5,307.5 L626,302 L614,295 L600,282 L597.5,265 L605,260 L615,259.3 L640,258.5 L649.6,255.3 L653.6,249.2 L655.6,233 L658.1,225 Z" fill="#fbfbfa" stroke="#303030" stroke-width="1.45" stroke-linejoin="round"/>
<path d="M658.5,206.2 L666.1,206 L666.1,216.4 L675,226 L684.6,233.4 L692,246 L694,260" fill="none" stroke="#303030" stroke-width="1.05" stroke-linejoin="round"/>
<path d="M681.9,193 L687.2,219.6 L700,221 L729,216.8 L758,216.2" fill="none" stroke="#303030" stroke-width="1.05" stroke-linejoin="round"/>
<path d="M712.1,169.3 L713.8,199 L715,217" fill="none" stroke="#303030" stroke-width="1.05" stroke-linejoin="round"/>
<path d="M757.6,138.6 L758.6,216 L757.4,232 L773.5,225 L786.7,217.8 L824.7,216.5" fill="none" stroke="#303030" stroke-width="1.05" stroke-linejoin="round"/>
<path d="M757.4,232 L715,253.2 L700,258" fill="none" stroke="#303030" stroke-width="1.05" stroke-linejoin="round"/>
<path d="M773.5,225 L773.5,275" fill="none" stroke="#303030" stroke-width="1.05" stroke-linejoin="round"/>
<path d="M737.2,245.5 L737.2,256" fill="none" stroke="#303030" stroke-width="1.05" stroke-linejoin="round"/>
<g stroke="#333" stroke-width="0.55">
<circle cx="627.4" cy="276.4" r="1.9" fill="#f7fcfd"/>
<circle cx="613.1" cy="267.9" r="2.4" fill="#9ebcda"/>
<circle cx="728.7" cy="268.8" r="2.5" fill="#88419d"/>
<circle cx="747.2" cy="269.6" r="2.4" fill="#88419d"/>
<circle cx="679.9" cy="250.4" r="2.4" fill="#8c96c6"/>
<circle cx="636.4" cy="293.4" r="2.4" fill="#8c6bb1"/>
<circle cx="757.3" cy="280.2" r="3.2" fill="#4d004b"/>
<circle cx="625.8" cy="260.9" r="2.6" fill="#810f7c"/>
<circle cx="700.6" cy="281.5" r="2.9" fill="#4d004b"/>
<circle cx="708.8" cy="212.1" r="2.2" fill="#f7fcfd"/>
<circle cx="727.8" cy="223.1" r="2.3" fill="#f7fcfd"/>
<circle cx="764.6" cy="274.3" r="2.8" fill="#cccccc"/>
<circle cx="706.1" cy="281.3" r="2.5" fill="#88419d"/>
<circle cx="607.2" cy="287.3" r="2.2" fill="#f7fcfd"/>
<circle cx="714.7" cy="254.1" r="2.1" fill="#4d004b"/>
<circle cx="670.7" cy="283.0" r="2.4" fill="#8c96c6"/>
<circle cx="636.2" cy="293.2" r="2.5" fill="#bfd3e6"/>
<circle cx="647.3" cy="263.8" r="2.8" fill="#9ebcda"/>
<circle cx="628.0" cy="278.2" r="2.3" fill="#bfd3e6"/>
<circle cx="616.2" cy="261.1" r="3.4" fill="#cccccc"/>
<circle cx="716.5" cy="249.4" r="2.5" fill="#88419d"/>
<circle cx="783.0" cy="278.3" r="2.9" fill="#cccccc"/>
<circle cx="768.0" cy="280.4" r="2.2" fill="#e0ecf4"/>
<circle cx="723.6" cy="268.1" r="3.2" fill="#4d004b"/>
<circle cx="783.4" cy="280.4" r="2.9" fill="#bfd3e6"/>
<circle cx="712.6" cy="291.4" r="2.3" fill="#810f7c"/>
<circle cx="737.2" cy="280.8" r="2.8" fill="#810f7c"/>
<circle cx="680.6" cy="276.1" r="2.8" fill="#4d004b"/>
<circle cx="649.6" cy="286.2" r="2.4" fill="#8c6bb1"/>
<circle cx="733.3" cy="297.3" r="2.3" fill="#e0ecf4"/>
<circle cx="785.7" cy="278.5" r="2.2" fill="#8c6bb1"/>
<circle cx="664.4" cy="269.5" r="2.1" fill="#88419d"/>
<circle cx="715.1" cy="235.8" r="1.9" fill="#f7fcfd"/>
<circle cx="632.2" cy="300.0" r="2.5" fill="#810f7c"/>
<circle cx="725.4" cy="294.9" r="3.2" fill="#88419d"/>
<circle cx="652.3" cy="268.8" r="2.2" fill="#8c96c6"/>
<circle cx="713.6" cy="285.5" r="3.4" fill="#810f7c"/>
<circle cx="733.5" cy="274.8" r="2.3" fill="#8c96c6"/>
<circle cx="641.8" cy="303.2" r="2.5" fill="#cccccc"/>
<circle cx="753.0" cy="275.0" r="3.0" fill="#4d004b"/>
<circle cx="615.4" cy="293.0" r="2.4" fill="#9ebcda"/>
<circle cx="682.0" cy="282.6" r="2.3" fill="#8c96c6"/>
<circle cx="697.5" cy="244.3" r="3.7" fill="#cccccc"/>
<circle cx="727.7" cy="255.1" r="2.4" fill="#bfd3e6"/>
<circle cx="669.6" cy="256.8" r="3.0" fill="#9ebcda"/>
<circle cx="783.6" cy="272.9" r="2.5" fill="#bfd3e6"/>
<circle cx="700.3" cy="242.7" r="3.1" fill="#e0ecf4"/>
<circle cx="684.3" cy="246.9" r="2.5" fill="#810f7c"/>
<circle cx="649.4" cy="286.6" r="2.4" fill="#9ebcda"/>
<circle cx="715.7" cy="272.4" r="3.1" fill="#4d004b"/>
<circle cx="647.3" cy="306.2" r="3.0" fill="#88419d"/>
<circle cx="707.0" cy="282.0" r="2.8" fill="#9ebcda"/>
<circle cx="746.3" cy="273.6" r="2.8" fill="#810f7c"/>
<circle cx="707.1" cy="232.2" r="3.2" fill="#e0ecf4"/>
<circle cx="734.0" cy="294.3" r="2.2" fill="#88419d"/>
<circle cx="713.5" cy="221.1" r="1.9" fill="#f7fcfd"/>
<circle cx="702.1" cy="233.1" r="3.1" fill="#e0ecf4"/>
<circle cx="616.0" cy="291.1" r="3.1" fill="#9ebcda"/>
<circle cx="682.8" cy="279.5" r="2.8" fill="#4d004b"/>
<circle cx="615.4" cy="281.4" r="2.8" fill="#88419d"/>
<circle cx="760.6" cy="277.2" r="2.5" fill="#f7fcfd"/>
<circle cx="784.7" cy="290.6" r="2.4" fill="#cccccc"/>
<circle cx="664.0" cy="288.9" r="2.1" fill="#8c6bb1"/>
<circle cx="609.6" cy="264.4" r="2.9" fill="#bfd3e6"/>
<circle cx="627.2" cy="269.3" r="2.4" fill="#cccccc"/>
<circle cx="716.8" cy="262.2" r="2.7" fill="#4d004b"/>
<circle cx="795.8" cy="270.9" r="3.5" fill="#cccccc"/>
<circle cx="776.7" cy="281.4" r="3.4" fill="#cccccc"/>
<circle cx="668.4" cy="282.7" r="2.5" fill="#9ebcda"/>
<circle cx="729.7" cy="226.9" r="2.1" fill="#f7fcfd"/>
<circle cx="755.9" cy="278.7" r="3.1" fill="#88419d"/>
<circle cx="751.3" cy="292.5" r="2.9" fill="#4d004b"/>
<circle cx="677.5" cy="273.3" r="2.2" fill="#bfd3e6"/>
<circle cx="675.1" cy="273.0" r="3.0" fill="#810f7c"/>
<circle cx="715.6" cy="237.0" r="3.3" fill="#9ebcda"/>
<circle cx="677.3" cy="257.0" r="3.4" fill="#cccccc"/>
<circle cx="644.8" cy="300.2" r="3.1" fill="#bfd3e6"/>
<circle cx="645.3" cy="286.4" r="2.3" fill="#8c96c6"/>
<circle cx="732.5" cy="277.8" r="3.7" fill="#cccccc"/>
<circle cx="716.9" cy="227.6" r="2.5" fill="#bfd3e6"/>
<circle cx="678.9" cy="267.2" r="3.1" fill="#810f7c"/>
<circle cx="754.0" cy="274.1" r="3.4" fill="#88419d"/>
<circle cx="769.0" cy="283.1" r="3.3" fill="#cccccc"/>
<circle cx="743.5" cy="270.9" r="2.1" fill="#8c96c6"/>
<circle cx="699.5" cy="289.2" r="2.1" fill="#8c6bb1"/>
<circle cx="736.8" cy="230.7" r="2.3" fill="#e0ecf4"/>
<circle cx="645.2" cy="303.6" r="2.8" fill="#8c96c6"/>
<circle cx="715.9" cy="257.8" r="3.4" fill="#cccccc"/>
<circle cx="711.9" cy="253.5" r="2.5" fill="#8c6bb1"/>
<circle cx="673.9" cy="286.7" r="3.1" fill="#88419d"/>
<circle cx="625.8" cy="279.8" r="2.1" fill="#bfd3e6"/>
<circle cx="732.9" cy="286.0" r="2.9" fill="#4d004b"/>
<circle cx="708.1" cy="265.8" r="2.6" fill="#9ebcda"/>
<circle cx="728.1" cy="281.5" r="3.2" fill="#4d004b"/>
<circle cx="664.9" cy="287.6" r="2.2" fill="#8c96c6"/>
<circle cx="769.1" cy="274.4" r="2.0" fill="#f7fcfd"/>
<circle cx="606.5" cy="285.3" r="2.7" fill="#8c96c6"/>
<circle cx="716.3" cy="286.6" r="2.4" fill="#4d004b"/>
<circle cx="634.7" cy="290.2" r="2.2" fill="#9ebcda"/>
<circle cx="722.7" cy="248.6" r="3.7" fill="#cccccc"/>
<circle cx="709.4" cy="216.2" r="2.0" fill="#f7fcfd"/>
<circle cx="743.8" cy="286.0" r="2.1" fill="#4d004b"/>
<circle cx="722.5" cy="259.0" r="3.0" fill="#810f7c"/>
<circle cx="789.3" cy="272.7" r="2.5" fill="#88419d"/>
<circle cx="704.7" cy="240.7" r="2.5" fill="#bfd3e6"/>
<circle cx="688.1" cy="246.5" r="2.2" fill="#9ebcda"/>
<circle cx="735.8" cy="219.6" r="1.8" fill="#f7fcfd"/>
<circle cx="664.2" cy="269.9" r="2.3" fill="#9ebcda"/>
<circle cx="733.2" cy="209.3" r="2.2" fill="#f7fcfd"/>
<circle cx="774.7" cy="270.7" r="2.7" fill="#f7fcfd"/>
<circle cx="722.5" cy="279.0" r="2.9" fill="#810f7c"/>
<circle cx="722.0" cy="221.8" r="1.9" fill="#9ebcda"/>
<circle cx="716.9" cy="218.8" r="2.1" fill="#f7fcfd"/>
<circle cx="615.5" cy="284.3" r="2.5" fill="#8c96c6"/>
<circle cx="698.9" cy="236.9" r="2.9" fill="#4d004b"/>
<circle cx="726.4" cy="270.6" r="3.0" fill="#88419d"/>
<circle cx="758.0" cy="278.6" r="2.8" fill="#810f7c"/>
<circle cx="707.6" cy="253.3" r="3.0" fill="#cccccc"/>
<circle cx="608.8" cy="273.7" r="2.7" fill="#cccccc"/>
<circle cx="631.7" cy="267.2" r="3.0" fill="#cccccc"/>
<circle cx="670.7" cy="282.1" r="2.9" fill="#f7fcfd"/>
<circle cx="791.2" cy="284.1" r="2.8" fill="#bfd3e6"/>
<circle cx="676.7" cy="242.8" r="3.2" fill="#cccccc"/>
<circle cx="741.7" cy="276.3" r="3.1" fill="#bfd3e6"/>
<circle cx="708.4" cy="231.2" r="2.9" fill="#9ebcda"/>
<circle cx="716.7" cy="255.4" r="2.2" fill="#4d004b"/>
<circle cx="641.9" cy="260.4" r="2.0" fill="#bfd3e6"/>
<circle cx="745.1" cy="299.4" r="3.1" fill="#810f7c"/>
<circle cx="654.7" cy="309.2" r="2.5" fill="#9ebcda"/>
<circle cx="671.2" cy="272.5" r="2.9" fill="#88419d"/>
<circle cx="723.5" cy="278.8" r="2.6" fill="#88419d"/>
<circle cx="639.6" cy="298.4" r="2.0" fill="#88419d"/>
<circle cx="771.6" cy="279.6" r="2.5" fill="#e0ecf4"/>
<circle cx="636.2" cy="279.0" r="2.5" fill="#8c96c6"/>
<circle cx="685.0" cy="267.8" r="2.5" fill="#810f7c"/>
<circle cx="713.9" cy="251.6" r="2.7" fill="#e0ecf4"/>
<circle cx="694.5" cy="258.3" r="2.5" fill="#88419d"/>
<circle cx="687.5" cy="244.8" r="2.1" fill="#8c6bb1"/>
<circle cx="661.8" cy="267.3" r="2.7" fill="#e0ecf4"/>
<circle cx="684.4" cy="266.5" r="2.8" fill="#e0ecf4"/>
<circle cx="715.1" cy="261.1" r="3.0" fill="#810f7c"/>
<circle cx="696.1" cy="287.9" r="2.3" fill="#810f7c"/>
<circle cx="702.8" cy="269.9" r="2.5" fill="#cccccc"/>
<circle cx="677.1" cy="256.0" r="3.4" fill="#cccccc"/>
<circle cx="720.5" cy="210.9" r="2.1" fill="#f7fcfd"/>
<circle cx="694.4" cy="280.0" r="2.3" fill="#88419d"/>
<circle cx="680.7" cy="258.5" r="2.2" fill="#8c96c6"/>
<circle cx="708.9" cy="220.0" r="2.4" fill="#e0ecf4"/>
<circle cx="671.7" cy="276.7" r="3.4" fill="#88419d"/>
<circle cx="734.5" cy="293.1" r="2.2" fill="#810f7c"/>
<circle cx="767.2" cy="272.9" r="2.2" fill="#bfd3e6"/>
<circle cx="696.5" cy="270.3" r="2.9" fill="#9ebcda"/>
<circle cx="695.4" cy="228.3" r="2.9" fill="#bfd3e6"/>
<circle cx="634.5" cy="287.2" r="3.0" fill="#8c6bb1"/>
<circle cx="743.2" cy="292.4" r="3.1" fill="#8c6bb1"/>
<circle cx="739.2" cy="262.7" r="2.8" fill="#810f7c"/>
<circle cx="641.5" cy="266.1" r="2.9" fill="#8c96c6"/>
<circle cx="681.3" cy="246.3" r="2.8" fill="#bfd3e6"/>
<circle cx="722.9" cy="264.4" r="2.3" fill="#4d004b"/>
<circle cx="668.3" cy="243.5" r="2.3" fill="#9ebcda"/>
<circle cx="746.0" cy="279.0" r="3.3" fill="#88419d"/>
<circle cx="800.0" cy="266.4" r="1.9" fill="#bfd3e6"/>
<circle cx="641.4" cy="306.4" r="2.4" fill="#88419d"/>
<circle cx="648.9" cy="280.2" r="3.0" fill="#9ebcda"/>
<circle cx="700.7" cy="237.7" r="2.8" fill="#e0ecf4"/>
<circle cx="656.5" cy="277.4" r="2.6" fill="#810f7c"/>
<circle cx="742.4" cy="276.3" r="2.6" fill="#88419d"/>
<circle cx="784.1" cy="284.2" r="2.2" fill="#9ebcda"/>
<circle cx="727.5" cy="264.7" r="3.0" fill="#810f7c"/>
<circle cx="729.7" cy="232.1" r="2.4" fill="#e0ecf4"/>
<circle cx="796.5" cy="277.0" r="2.7" fill="#e0ecf4"/>
<circle cx="713.6" cy="202.2" r="2.6" fill="#e0ecf4"/>
<circle cx="681.3" cy="284.9" r="2.7" fill="#810f7c"/>
<circle cx="757.1" cy="274.6" r="3.4" fill="#cccccc"/>
<circle cx="772.9" cy="287.6" r="2.7" fill="#cccccc"/>
<circle cx="651.7" cy="277.0" r="2.6" fill="#8c6bb1"/>
<circle cx="691.9" cy="234.5" r="2.5" fill="#e0ecf4"/>
<circle cx="606.9" cy="274.8" r="3.0" fill="#cccccc"/>
<circle cx="639.8" cy="284.1" r="2.8" fill="#9ebcda"/>
<circle cx="758.5" cy="281.5" r="2.7" fill="#8c6bb1"/>
<circle cx="705.8" cy="239.3" r="2.6" fill="#f7fcfd"/>
<circle cx="791.3" cy="272.6" r="2.1" fill="#e0ecf4"/>
<circle cx="738.2" cy="257.9" r="2.4" fill="#810f7c"/>
<circle cx="723.5" cy="281.1" r="2.8" fill="#9ebcda"/>
<circle cx="740.0" cy="225.1" r="2.3" fill="#f7fcfd"/>
<circle cx="683.1" cy="260.9" r="2.3" fill="#8c6bb1"/>
<circle cx="721.9" cy="268.0" r="3.1" fill="#cccccc"/>
<circle cx="694.6" cy="248.6" r="3.2" fill="#bfd3e6"/>
<circle cx="691.2" cy="283.4" r="2.2" fill="#9ebcda"/>
<circle cx="680.2" cy="246.1" r="2.7" fill="#bfd3e6"/>
<circle cx="699.8" cy="286.5" r="3.3" fill="#4d004b"/>
<circle cx="673.1" cy="239.4" r="3.1" fill="#8c96c6"/>
<circle cx="709.3" cy="227.2" r="3.3" fill="#bfd3e6"/>
<circle cx="768.0" cy="280.8" r="3.4" fill="#cccccc"/>
<circle cx="775.6" cy="278.3" r="2.2" fill="#8c6bb1"/>
<circle cx="667.4" cy="281.7" r="2.3" fill="#bfd3e6"/>
<circle cx="633.6" cy="268.8" r="2.6" fill="#8c96c6"/>
<circle cx="650.8" cy="262.1" r="2.6" fill="#cccccc"/>
<circle cx="720.4" cy="268.2" r="2.4" fill="#810f7c"/>
<circle cx="721.2" cy="207.2" r="2.1" fill="#f7fcfd"/>
<circle cx="629.2" cy="302.4" r="2.7" fill="#9ebcda"/>
<circle cx="719.3" cy="290.1" r="2.3" fill="#8c96c6"/>
<circle cx="722.3" cy="277.7" r="2.4" fill="#9ebcda"/>
<circle cx="627.4" cy="259.4" r="2.2" fill="#88419d"/>
<circle cx="776.2" cy="270.9" r="1.9" fill="#f7fcfd"/>
<circle cx="633.0" cy="267.4" r="3.0" fill="#810f7c"/>
<circle cx="615.6" cy="261.8" r="2.6" fill="#88419d"/>
<circle cx="687.7" cy="237.5" r="2.7" fill="#cccccc"/>
<circle cx="710.2" cy="265.8" r="3.3" fill="#4d004b"/>
<circle cx="738.1" cy="289.1" r="3.2" fill="#810f7c"/>
<circle cx="704.8" cy="283.7" r="2.4" fill="#810f7c"/>
<circle cx="631.9" cy="290.0" r="2.0" fill="#f7fcfd"/>
<circle cx="726.6" cy="215.6" r="2.3" fill="#8c96c6"/>
<circle cx="726.1" cy="272.3" r="3.3" fill="#810f7c"/>
<circle cx="651.5" cy="283.1" r="2.6" fill="#88419d"/>
<circle cx="698.6" cy="263.7" r="2.7" fill="#e0ecf4"/>
<circle cx="607.2" cy="281.8" r="2.0" fill="#9ebcda"/>
<circle cx="701.0" cy="273.4" r="2.8" fill="#810f7c"/>
<circle cx="638.3" cy="289.0" r="2.9" fill="#8c6bb1"/>
<circle cx="772.1" cy="278.7" r="2.9" fill="#e0ecf4"/>
<circle cx="723.8" cy="275.3" r="2.4" fill="#4d004b"/>
<circle cx="770.8" cy="268.3" r="2.1" fill="#e0ecf4"/>
<circle cx="701.1" cy="283.1" r="3.1" fill="#4d004b"/>
<circle cx="642.4" cy="272.1" r="2.0" fill="#88419d"/>
<circle cx="622.5" cy="275.5" r="2.4" fill="#e0ecf4"/>
<circle cx="708.0" cy="237.1" r="2.2" fill="#bfd3e6"/>
<circle cx="763.6" cy="279.6" r="2.0" fill="#f7fcfd"/>
<circle cx="610.8" cy="275.1" r="2.1" fill="#bfd3e6"/>
<circle cx="651.6" cy="296.6" r="2.3" fill="#bfd3e6"/>
<circle cx="749.8" cy="274.1" r="2.3" fill="#810f7c"/>
<circle cx="734.9" cy="288.7" r="3.1" fill="#810f7c"/>
<circle cx="612.6" cy="260.0" r="2.7" fill="#8c96c6"/>
<circle cx="690.4" cy="232.1" r="3.2" fill="#9ebcda"/>
<circle cx="648.8" cy="261.3" r="3.1" fill="#8c96c6"/>
<circle cx="650.3" cy="292.4" r="2.1" fill="#88419d"/>
<circle cx="709.8" cy="215.7" r="2.0" fill="#e0ecf4"/>
<circle cx="690.0" cy="263.7" r="3.1" fill="#88419d"/>
<circle cx="691.7" cy="281.3" r="2.2" fill="#810f7c"/>
<circle cx="760.1" cy="288.2" r="2.1" fill="#e0ecf4"/>
<circle cx="662.0" cy="253.6" r="2.7" fill="#bfd3e6"/>
<circle cx="703.5" cy="253.8" r="3.0" fill="#e0ecf4"/>
<circle cx="715.3" cy="254.1" r="2.9" fill="#4d004b"/>
<circle cx="657.9" cy="277.1" r="2.3" fill="#4d004b"/>
<circle cx="726.1" cy="257.8" r="2.5" fill="#cccccc"/>
<circle cx="612.4" cy="264.9" r="3.0" fill="#f7fcfd"/>
<circle cx="767.0" cy="288.9" r="1.9" fill="#e0ecf4"/>
<circle cx="721.8" cy="272.9" r="3.5" fill="#88419d"/>
<circle cx="731.0" cy="296.5" r="3.3" fill="#810f7c"/>
<circle cx="602.0" cy="270.2" r="2.4" fill="#88419d"/>
<circle cx="728.9" cy="207.2" r="1.9" fill="#f7fcfd"/>
<circle cx="679.4" cy="235.3" r="2.8" fill="#bfd3e6"/>
<circle cx="638.4" cy="299.2" r="2.7" fill="#8c6bb1"/>
<circle cx="684.4" cy="276.9" r="2.5" fill="#9ebcda"/>
<circle cx="689.2" cy="258.8" r="3.4" fill="#4d004b"/>
<circle cx="723.6" cy="217.3" r="2.5" fill="#f7fcfd"/>
<circle cx="638.8" cy="285.9" r="2.1" fill="#bfd3e6"/>
<circle cx="666.3" cy="271.2" r="2.4" fill="#e0ecf4"/>
<circle cx="731.8" cy="287.4" r="2.8" fill="#4d004b"/>
<circle cx="713.8" cy="265.8" r="2.6" fill="#810f7c"/>
<circle cx="649.9" cy="312.8" r="3.2" fill="#cccccc"/>
<circle cx="673.1" cy="233.5" r="3.1" fill="#bfd3e6"/>
<circle cx="697.4" cy="235.3" r="3.0" fill="#9ebcda"/>
<circle cx="673.1" cy="273.8" r="3.3" fill="#9ebcda"/>
<circle cx="732.7" cy="209.4" r="1.9" fill="#f7fcfd"/>
<circle cx="699.8" cy="275.3" r="2.7" fill="#8c6bb1"/>
<circle cx="665.1" cy="289.1" r="2.2" fill="#88419d"/>
<circle cx="709.0" cy="242.0" r="3.0" fill="#cccccc"/>
<circle cx="779.1" cy="271.1" r="2.4" fill="#f7fcfd"/>
<circle cx="633.0" cy="277.3" r="2.6" fill="#8c6bb1"/>
<circle cx="612.9" cy="292.9" r="2.0" fill="#810f7c"/>
<circle cx="731.5" cy="292.5" r="2.7" fill="#4d004b"/>
<circle cx="665.6" cy="281.3" r="2.3" fill="#9ebcda"/>
<circle cx="718.7" cy="225.9" r="2.4" fill="#f7fcfd"/>
<circle cx="602.5" cy="279.6" r="3.1" fill="#bfd3e6"/>
<circle cx="711.3" cy="240.2" r="2.6" fill="#bfd3e6"/>
<circle cx="693.6" cy="243.8" r="3.6" fill="#cccccc"/>
<circle cx="711.3" cy="277.1" r="2.5" fill="#4d004b"/>
<circle cx="721.2" cy="295.8" r="2.6" fill="#88419d"/>
<circle cx="718.4" cy="257.3" r="2.7" fill="#810f7c"/>
<circle cx="792.4" cy="277.9" r="2.7" fill="#810f7c"/>
<circle cx="688.6" cy="228.0" r="3.8" fill="#cccccc"/>
<circle cx="672.6" cy="231.5" r="2.5" fill="#810f7c"/>
<circle cx="764.5" cy="280.1" r="2.6" fill="#f7fcfd"/>
<circle cx="700.6" cy="260.5" r="3.2" fill="#bfd3e6"/>
<circle cx="766.4" cy="284.4" r="2.6" fill="#bfd3e6"/>
<circle cx="680.8" cy="239.8" r="3.1" fill="#f7fcfd"/>
<circle cx="602.4" cy="273.5" r="2.8" fill="#8c6bb1"/>
<circle cx="750.9" cy="264.9" r="2.9" fill="#8c96c6"/>
<circle cx="636.9" cy="264.5" r="2.3" fill="#9ebcda"/>
<circle cx="755.4" cy="286.7" r="3.2" fill="#4d004b"/>
<circle cx="724.9" cy="219.7" r="2.4" fill="#f7fcfd"/>
<circle cx="716.5" cy="285.0" r="3.0" fill="#810f7c"/>
<circle cx="713.5" cy="227.0" r="2.1" fill="#f7fcfd"/>
<circle cx="754.8" cy="275.5" r="2.8" fill="#e0ecf4"/>
<circle cx="645.4" cy="260.4" r="2.5" fill="#9ebcda"/>
<circle cx="697.5" cy="249.7" r="3.2" fill="#8c96c6"/>
<circle cx="722.3" cy="240.4" r="2.5" fill="#f7fcfd"/>
<circle cx="705.9" cy="205.1" r="2.2" fill="#f7fcfd"/>
<circle cx="728.2" cy="265.2" r="2.9" fill="#88419d"/>
<circle cx="736.9" cy="263.8" r="2.2" fill="#4d004b"/>
<circle cx="750.9" cy="275.7" r="2.6" fill="#810f7c"/>
<circle cx="611.2" cy="285.8" r="2.0" fill="#e0ecf4"/>
<circle cx="730.2" cy="257.6" r="2.3" fill="#88419d"/>
<circle cx="711.7" cy="242.1" r="3.1" fill="#8c96c6"/>
<circle cx="715.9" cy="238.4" r="2.6" fill="#f7fcfd"/>
<circle cx="709.0" cy="285.2" r="2.9" fill="#88419d"/>
<circle cx="683.8" cy="276.3" r="2.3" fill="#e0ecf4"/>
<circle cx="680.0" cy="280.9" r="3.3" fill="#4d004b"/>
<circle cx="788.6" cy="279.0" r="2.7" fill="#e0ecf4"/>
<circle cx="650.6" cy="312.0" r="2.4" fill="#bfd3e6"/>
<circle cx="700.0" cy="273.7" r="2.9" fill="#9ebcda"/>
<circle cx="766.4" cy="279.1" r="2.0" fill="#f7fcfd"/>
<circle cx="727.2" cy="207.0" r="2.5" fill="#e0ecf4"/>
<circle cx="743.1" cy="299.1" r="3.0" fill="#4d004b"/>
<circle cx="650.9" cy="305.1" r="2.7" fill="#810f7c"/>
<circle cx="679.8" cy="281.5" r="3.2" fill="#4d004b"/>
<circle cx="794.1" cy="282.6" r="2.1" fill="#f7fcfd"/>
<circle cx="717.3" cy="257.4" r="2.5" fill="#bfd3e6"/>
<circle cx="650.9" cy="289.4" r="2.1" fill="#bfd3e6"/>
<circle cx="651.0" cy="270.1" r="2.3" fill="#9ebcda"/>
<circle cx="682.9" cy="253.4" r="3.5" fill="#cccccc"/>
<circle cx="629.1" cy="286.6" r="2.2" fill="#9ebcda"/>
<circle cx="723.9" cy="216.2" r="2.0" fill="#f7fcfd"/>
<circle cx="720.6" cy="283.4" r="2.4" fill="#bfd3e6"/>
<circle cx="757.3" cy="279.1" r="1.9" fill="#e0ecf4"/>
<circle cx="720.4" cy="219.6" r="2.3" fill="#f7fcfd"/>
<circle cx="723.1" cy="282.2" r="2.4" fill="#88419d"/>
<circle cx="640.2" cy="273.5" r="2.1" fill="#f7fcfd"/>
<circle cx="728.7" cy="257.3" r="2.5" fill="#8c96c6"/>
<circle cx="645.9" cy="301.0" r="2.3" fill="#9ebcda"/>
<circle cx="722.4" cy="216.6" r="2.0" fill="#9ebcda"/>
<circle cx="615.7" cy="260.6" r="2.1" fill="#9ebcda"/>
<circle cx="718.2" cy="216.0" r="2.5" fill="#bfd3e6"/>
<circle cx="716.0" cy="280.2" r="3.3" fill="#4d004b"/>
<circle cx="705.8" cy="270.3" r="3.3" fill="#8c6bb1"/>
<circle cx="704.0" cy="256.7" r="2.3" fill="#9ebcda"/>
<circle cx="738.3" cy="277.5" r="2.1" fill="#88419d"/>
<circle cx="755.3" cy="275.6" r="2.6" fill="#810f7c"/>
<circle cx="614.9" cy="288.6" r="2.2" fill="#8c96c6"/>
<circle cx="659.4" cy="243.6" r="2.3" fill="#bfd3e6"/>
<circle cx="602.4" cy="266.4" r="2.5" fill="#f7fcfd"/>
<circle cx="644.2" cy="301.1" r="2.2" fill="#9ebcda"/>
<circle cx="632.9" cy="297.9" r="2.3" fill="#bfd3e6"/>
<circle cx="667.0" cy="245.8" r="2.2" fill="#bfd3e6"/>
<circle cx="644.6" cy="289.0" r="2.3" fill="#4d004b"/>
<circle cx="624.9" cy="275.2" r="1.9" fill="#8c96c6"/>
<circle cx="688.9" cy="273.6" r="2.5" fill="#810f7c"/>
<circle cx="696.4" cy="276.1" r="3.3" fill="#810f7c"/>
<circle cx="746.4" cy="260.2" r="3.4" fill="#cccccc"/>
<circle cx="737.5" cy="285.4" r="2.2" fill="#88419d"/>
<circle cx="671.0" cy="275.5" r="3.3" fill="#bfd3e6"/>
<circle cx="715.0" cy="249.0" r="2.2" fill="#e0ecf4"/>
<circle cx="717.3" cy="258.1" r="3.1" fill="#cccccc"/>
<circle cx="700.4" cy="239.6" r="2.6" fill="#bfd3e6"/>
<circle cx="673.8" cy="278.0" r="3.3" fill="#88419d"/>
<circle cx="712.8" cy="219.5" r="2.0" fill="#f7fcfd"/>
<circle cx="636.1" cy="280.8" r="2.7" fill="#f7fcfd"/>
<circle cx="715.3" cy="269.8" r="2.1" fill="#4d004b"/>
<circle cx="769.0" cy="277.3" r="2.8" fill="#9ebcda"/>
<circle cx="721.5" cy="236.1" r="2.5" fill="#f7fcfd"/>
<circle cx="649.9" cy="300.7" r="2.6" fill="#f7fcfd"/>
<circle cx="604.1" cy="281.5" r="2.5" fill="#88419d"/>
<circle cx="732.7" cy="229.6" r="2.4" fill="#f7fcfd"/>
<circle cx="720.3" cy="197.1" r="2.5" fill="#f7fcfd"/>
<circle cx="613.3" cy="292.0" r="2.5" fill="#9ebcda"/>
<circle cx="684.0" cy="250.5" r="2.0" fill="#88419d"/>
<circle cx="711.7" cy="203.9" r="2.6" fill="#f7fcfd"/>
<circle cx="632.3" cy="294.1" r="2.9" fill="#8c6bb1"/>
<circle cx="645.5" cy="298.1" r="3.1" fill="#810f7c"/>
<circle cx="695.9" cy="244.5" r="3.2" fill="#e0ecf4"/>
<circle cx="673.2" cy="241.7" r="2.3" fill="#bfd3e6"/>
<circle cx="704.9" cy="275.2" r="3.4" fill="#810f7c"/>
<circle cx="780.1" cy="276.6" r="2.7" fill="#4d004b"/>
<circle cx="739.8" cy="224.3" r="2.1" fill="#f7fcfd"/>
<circle cx="668.2" cy="268.4" r="3.0" fill="#4d004b"/>
<circle cx="657.3" cy="278.1" r="2.2" fill="#8c96c6"/>
<circle cx="624.7" cy="282.8" r="2.1" fill="#4d004b"/>
<circle cx="685.9" cy="279.2" r="2.1" fill="#f7fcfd"/>
<circle cx="701.2" cy="225.2" r="2.8" fill="#f7fcfd"/>
<circle cx="700.2" cy="240.4" r="3.2" fill="#9ebcda"/>
<circle cx="716.3" cy="214.6" r="2.5" fill="#e0ecf4"/>
<circle cx="674.7" cy="272.9" r="3.0" fill="#810f7c"/>
<circle cx="709.9" cy="206.4" r="2.1" fill="#e0ecf4"/>
<circle cx="715.5" cy="230.6" r="2.2" fill="#e0ecf4"/>
<circle cx="621.1" cy="287.9" r="2.2" fill="#8c96c6"/>
<circle cx="779.7" cy="286.3" r="3.3" fill="#cccccc"/>
<circle cx="679.2" cy="284.0" r="2.5" fill="#88419d"/>
<circle cx="614.9" cy="273.1" r="2.2" fill="#8c6bb1"/>
<circle cx="681.3" cy="233.1" r="2.4" fill="#cccccc"/>
<circle cx="673.3" cy="234.4" r="2.6" fill="#e0ecf4"/>
<circle cx="736.9" cy="258.3" r="3.3" fill="#4d004b"/>
<circle cx="680.7" cy="257.5" r="2.7" fill="#8c96c6"/>
<circle cx="664.5" cy="273.5" r="3.1" fill="#810f7c"/>
<circle cx="723.4" cy="276.0" r="2.4" fill="#88419d"/>
<circle cx="708.5" cy="246.4" r="2.5" fill="#f7fcfd"/>
<circle cx="696.8" cy="284.2" r="3.3" fill="#4d004b"/>
<circle cx="715.1" cy="270.6" r="3.8" fill="#cccccc"/>
<circle cx="743.9" cy="271.1" r="2.5" fill="#88419d"/>
<circle cx="763.5" cy="279.3" r="2.5" fill="#cccccc"/>
<circle cx="763.2" cy="274.6" r="2.7" fill="#e0ecf4"/>
<circle cx="638.5" cy="259.6" r="2.5" fill="#cccccc"/>
<circle cx="661.3" cy="279.5" r="3.0" fill="#8c96c6"/>
<circle cx="737.8" cy="273.5" r="2.6" fill="#810f7c"/>
<circle cx="672.2" cy="283.5" r="2.3" fill="#8c96c6"/>
<circle cx="743.5" cy="283.8" r="2.7" fill="#8c6bb1"/>
<circle cx="707.3" cy="285.1" r="2.5" fill="#4d004b"/>
<circle cx="675.9" cy="256.4" r="2.3" fill="#bfd3e6"/>
<circle cx="696.5" cy="231.9" r="2.9" fill="#bfd3e6"/>
<circle cx="695.9" cy="242.5" r="2.4" fill="#bfd3e6"/>
<circle cx="663.9" cy="263.5" r="2.4" fill="#9ebcda"/>
<circle cx="708.2" cy="233.1" r="2.6" fill="#bfd3e6"/>
<circle cx="657.5" cy="273.2" r="2.4" fill="#bfd3e6"/>
<circle cx="787.1" cy="291.2" r="3.0" fill="#cccccc"/>
<circle cx="710.3" cy="204.6" r="2.4" fill="#e0ecf4"/>
<circle cx="621.1" cy="280.4" r="2.7" fill="#e0ecf4"/>
<circle cx="680.3" cy="267.3" r="2.1" fill="#88419d"/>
<circle cx="620.1" cy="274.5" r="2.9" fill="#810f7c"/>
<circle cx="638.0" cy="305.2" r="2.8" fill="#bfd3e6"/>
<circle cx="758.4" cy="285.3" r="2.5" fill="#9ebcda"/>
<circle cx="665.8" cy="260.5" r="2.6" fill="#bfd3e6"/>
<circle cx="737.3" cy="281.6" r="2.7" fill="#4d004b"/>
<circle cx="707.4" cy="230.7" r="2.0" fill="#bfd3e6"/>
<circle cx="684.0" cy="234.1" r="3.3" fill="#f7fcfd"/>
<circle cx="674.4" cy="284.2" r="3.4" fill="#88419d"/>
<circle cx="683.0" cy="256.1" r="2.1" fill="#88419d"/>
<circle cx="611.3" cy="288.4" r="2.7" fill="#9ebcda"/>
<circle cx="604.4" cy="275.0" r="2.0" fill="#8c6bb1"/>
<circle cx="641.1" cy="297.1" r="1.9" fill="#8c6bb1"/>
<circle cx="666.7" cy="242.8" r="2.2" fill="#bfd3e6"/>
<circle cx="757.2" cy="274.0" r="3.1" fill="#4d004b"/>
<circle cx="683.4" cy="251.9" r="2.6" fill="#cccccc"/>
<circle cx="682.2" cy="249.3" r="2.9" fill="#9ebcda"/>
<circle cx="661.4" cy="269.0" r="3.0" fill="#88419d"/>
<circle cx="788.2" cy="272.0" r="2.0" fill="#9ebcda"/>
<circle cx="689.7" cy="261.8" r="2.4" fill="#810f7c"/>
<circle cx="642.4" cy="283.2" r="2.7" fill="#8c96c6"/>
<circle cx="693.8" cy="262.0" r="3.0" fill="#9ebcda"/>
<circle cx="734.8" cy="281.4" r="3.0" fill="#810f7c"/>
<circle cx="620.1" cy="275.2" r="2.2" fill="#8c6bb1"/>
<circle cx="611.1" cy="288.6" r="2.8" fill="#bfd3e6"/>
<circle cx="703.4" cy="232.5" r="3.2" fill="#e0ecf4"/>
<circle cx="681.3" cy="260.6" r="2.4" fill="#cccccc"/>
<circle cx="669.1" cy="233.9" r="2.7" fill="#f7fcfd"/>
<circle cx="772.4" cy="272.8" r="2.1" fill="#f7fcfd"/>
<circle cx="730.4" cy="227.3" r="2.0" fill="#e0ecf4"/>
<circle cx="722.5" cy="217.5" r="2.0" fill="#f7fcfd"/>
<circle cx="604.1" cy="271.2" r="2.5" fill="#e0ecf4"/>
<circle cx="605.0" cy="273.2" r="2.7" fill="#88419d"/>
<circle cx="770.2" cy="274.9" r="2.7" fill="#cccccc"/>
<circle cx="738.2" cy="258.1" r="3.5" fill="#cccccc"/>
<circle cx="697.3" cy="269.5" r="2.5" fill="#88419d"/>
<circle cx="714.7" cy="249.9" r="3.0" fill="#8c96c6"/>
<circle cx="624.6" cy="271.3" r="2.6" fill="#8c96c6"/>
<circle cx="638.6" cy="292.5" r="3.1" fill="#88419d"/>
<circle cx="675.7" cy="246.1" r="3.1" fill="#9ebcda"/>
<circle cx="710.4" cy="228.5" r="1.8" fill="#e0ecf4"/>
<circle cx="640.4" cy="267.1" r="2.6" fill="#8c96c6"/>
<circle cx="763.1" cy="277.0" r="2.5" fill="#9ebcda"/>
<circle cx="693.0" cy="254.6" r="2.5" fill="#8c6bb1"/>
<circle cx="624.2" cy="283.3" r="3.1" fill="#810f7c"/>
<circle cx="662.1" cy="237.5" r="2.3" fill="#9ebcda"/>
<circle cx="739.0" cy="279.8" r="2.7" fill="#8c6bb1"/>
<circle cx="678.8" cy="245.2" r="3.3" fill="#8c6bb1"/>
<circle cx="734.2" cy="267.4" r="2.4" fill="#f7fcfd"/>
<circle cx="764.8" cy="283.0" r="2.8" fill="#f7fcfd"/>
<circle cx="760.2" cy="288.5" r="2.7" fill="#e0ecf4"/>
<circle cx="668.3" cy="236.6" r="2.8" fill="#cccccc"/>
<circle cx="734.1" cy="289.2" r="2.7" fill="#810f7c"/>
<circle cx="699.0" cy="258.7" r="3.3" fill="#810f7c"/>
<circle cx="712.2" cy="290.8" r="2.2" fill="#810f7c"/>
<circle cx="719.2" cy="230.6" r="2.0" fill="#f7fcfd"/>
<circle cx="736.0" cy="289.1" r="3.5" fill="#4d004b"/>
<circle cx="684.0" cy="256.8" r="3.9" fill="#cccccc"/>
<circle cx="800.2" cy="267.6" r="2.9" fill="#cccccc"/>
<circle cx="739.8" cy="282.2" r="2.6" fill="#8c96c6"/>
<circle cx="646.6" cy="296.5" r="1.9" fill="#bfd3e6"/>
<circle cx="720.3" cy="280.6" r="3.4" fill="#88419d"/>
<circle cx="772.3" cy="285.2" r="2.0" fill="#88419d"/>
<circle cx="705.2" cy="277.7" r="3.3" fill="#8c6bb1"/>
<circle cx="674.6" cy="234.1" r="3.1" fill="#9ebcda"/>
<circle cx="706.6" cy="264.3" r="3.3" fill="#810f7c"/>
<circle cx="674.2" cy="267.0" r="3.3" fill="#88419d"/>
<circle cx="735.3" cy="281.2" r="2.3" fill="#4d004b"/>
<circle cx="690.2" cy="227.7" r="2.7" fill="#f7fcfd"/>
<circle cx="711.8" cy="230.7" r="2.1" fill="#9ebcda"/>
<circle cx="624.8" cy="271.5" r="2.5" fill="#cccccc"/>
<circle cx="722.7" cy="216.0" r="2.4" fill="#f7fcfd"/>
<circle cx="717.6" cy="281.2" r="2.2" fill="#810f7c"/>
<circle cx="751.8" cy="295.6" r="2.4" fill="#88419d"/>
<circle cx="748.6" cy="266.7" r="2.5" fill="#810f7c"/>
<circle cx="682.8" cy="263.9" r="2.8" fill="#4d004b"/>
<circle cx="646.5" cy="288.6" r="2.3" fill="#8c6bb1"/>
<circle cx="653.3" cy="289.0" r="2.9" fill="#e0ecf4"/>
<circle cx="623.0" cy="294.6" r="2.4" fill="#8c96c6"/>
<circle cx="651.5" cy="262.8" r="3.0" fill="#8c96c6"/>
<circle cx="671.6" cy="246.4" r="2.0" fill="#9ebcda"/>
<circle cx="647.3" cy="307.0" r="2.2" fill="#88419d"/>
<circle cx="649.4" cy="306.9" r="2.5" fill="#810f7c"/>
<circle cx="679.5" cy="269.6" r="3.1" fill="#88419d"/>
<circle cx="738.2" cy="217.7" r="2.6" fill="#f7fcfd"/>
<circle cx="644.4" cy="292.2" r="2.2" fill="#9ebcda"/>
<circle cx="661.2" cy="293.5" r="2.2" fill="#4d004b"/>
<circle cx="718.1" cy="257.6" r="2.3" fill="#88419d"/>
<circle cx="729.1" cy="294.9" r="2.9" fill="#4d004b"/>
<circle cx="631.0" cy="292.8" r="3.1" fill="#88419d"/>
<circle cx="638.2" cy="278.6" r="2.7" fill="#8c96c6"/>
<circle cx="718.5" cy="266.3" r="3.2" fill="#88419d"/>
<circle cx="711.2" cy="258.2" r="2.4" fill="#88419d"/>
<circle cx="733.8" cy="260.3" r="2.6" fill="#88419d"/>
<circle cx="628.1" cy="259.4" r="2.5" fill="#9ebcda"/>
<circle cx="686.9" cy="255.5" r="2.0" fill="#bfd3e6"/>
<circle cx="762.3" cy="271.6" r="2.1" fill="#f7fcfd"/>
<circle cx="606.3" cy="282.1" r="2.1" fill="#8c96c6"/>
<circle cx="715.2" cy="281.0" r="2.9" fill="#810f7c"/>
<circle cx="715.1" cy="235.2" r="1.9" fill="#8c96c6"/>
<circle cx="670.8" cy="238.9" r="2.4" fill="#e0ecf4"/>
<circle cx="738.5" cy="298.4" r="2.3" fill="#810f7c"/>
<circle cx="713.4" cy="237.2" r="2.4" fill="#bfd3e6"/>
<circle cx="624.0" cy="296.1" r="2.4" fill="#88419d"/>
<circle cx="774.3" cy="272.6" r="2.1" fill="#bfd3e6"/>
<circle cx="754.7" cy="288.3" r="2.2" fill="#810f7c"/>
<circle cx="725.5" cy="259.9" r="2.4" fill="#8c6bb1"/>
<circle cx="651.5" cy="309.4" r="2.7" fill="#cccccc"/>
<circle cx="795.0" cy="268.4" r="2.5" fill="#bfd3e6"/>
<circle cx="745.8" cy="264.7" r="2.3" fill="#88419d"/>
<circle cx="694.1" cy="274.4" r="2.7" fill="#4d004b"/>
<circle cx="757.7" cy="274.4" r="2.2" fill="#8c6bb1"/>
<circle cx="722.8" cy="287.4" r="2.6" fill="#88419d"/>
<circle cx="692.9" cy="244.1" r="2.7" fill="#8c96c6"/>
<circle cx="703.7" cy="203.8" r="1.9" fill="#f7fcfd"/>
<circle cx="702.5" cy="286.3" r="3.4" fill="#4d004b"/>
<circle cx="716.4" cy="202.6" r="2.4" fill="#e0ecf4"/>
<circle cx="627.8" cy="294.0" r="2.7" fill="#cccccc"/>
<circle cx="776.1" cy="285.7" r="2.0" fill="#bfd3e6"/>
<circle cx="722.6" cy="266.6" r="3.3" fill="#8c6bb1"/>
<circle cx="659.4" cy="294.2" r="2.8" fill="#cccccc"/>
<circle cx="726.4" cy="235.3" r="2.2" fill="#cccccc"/>
<circle cx="644.0" cy="286.5" r="2.0" fill="#8c96c6"/>
<circle cx="758.0" cy="275.6" r="2.2" fill="#e0ecf4"/>
<circle cx="633.3" cy="274.0" r="3.0" fill="#8c96c6"/>
<circle cx="719.1" cy="276.9" r="2.2" fill="#810f7c"/>
<circle cx="737.3" cy="285.9" r="3.1" fill="#4d004b"/>
<circle cx="719.9" cy="226.6" r="2.3" fill="#f7fcfd"/>
<circle cx="701.0" cy="223.9" r="2.8" fill="#9ebcda"/>
<circle cx="715.9" cy="200.3" r="1.9" fill="#bfd3e6"/>
<circle cx="684.0" cy="235.5" r="2.3" fill="#88419d"/>
<circle cx="717.9" cy="233.4" r="1.9" fill="#e0ecf4"/>
<circle cx="790.5" cy="267.1" r="2.1" fill="#e0ecf4"/>
<circle cx="746.9" cy="270.9" r="3.3" fill="#9ebcda"/>
<circle cx="786.9" cy="286.4" r="2.9" fill="#cccccc"/>
<circle cx="599.3" cy="267.1" r="3.1" fill="#810f7c"/>
<circle cx="787.2" cy="284.2" r="2.5" fill="#8c6bb1"/>
<circle cx="785.0" cy="290.6" r="2.0" fill="#8c6bb1"/>
<circle cx="687.8" cy="232.1" r="2.2" fill="#e0ecf4"/>
<circle cx="625.9" cy="295.2" r="1.9" fill="#bfd3e6"/>
<circle cx="627.0" cy="276.9" r="2.0" fill="#9ebcda"/>
<circle cx="654.6" cy="278.7" r="2.7" fill="#4d004b"/>
<circle cx="722.1" cy="216.6" r="2.2" fill="#e0ecf4"/>
<circle cx="671.5" cy="277.7" r="2.3" fill="#88419d"/>
<circle cx="688.1" cy="236.0" r="3.2" fill="#e0ecf4"/>
<circle cx="722.1" cy="296.1" r="2.6" fill="#cccccc"/>
<circle cx="665.9" cy="267.2" r="2.6" fill="#cccccc"/>
<circle cx="706.9" cy="287.5" r="3.4" fill="#8c6bb1"/>
<circle cx="611.0" cy="277.1" r="2.3" fill="#e0ecf4"/>
<circle cx="636.5" cy="270.8" r="2.7" fill="#9ebcda"/>
<circle cx="690.8" cy="267.0" r="3.1" fill="#88419d"/>
<circle cx="622.7" cy="275.8" r="2.8" fill="#9ebcda"/>
<circle cx="621.4" cy="273.9" r="3.1" fill="#bfd3e6"/>
<circle cx="654.1" cy="300.1" r="2.9" fill="#4d004b"/>
<circle cx="741.2" cy="225.8" r="2.4" fill="#f7fcfd"/>
<circle cx="626.4" cy="290.0" r="2.5" fill="#e0ecf4"/>
<circle cx="707.8" cy="243.8" r="3.0" fill="#88419d"/>
<circle cx="709.3" cy="291.8" r="3.3" fill="#810f7c"/>
<circle cx="776.6" cy="279.4" r="2.6" fill="#e0ecf4"/>
<circle cx="672.7" cy="266.9" r="2.1" fill="#bfd3e6"/>
<circle cx="644.7" cy="293.3" r="2.6" fill="#88419d"/>
<circle cx="727.3" cy="213.1" r="2.2" fill="#e0ecf4"/>
<circle cx="791.1" cy="283.5" r="3.0" fill="#cccccc"/>
<circle cx="670.2" cy="239.2" r="2.2" fill="#8c96c6"/>
<circle cx="624.3" cy="292.2" r="2.0" fill="#8c6bb1"/>
<circle cx="661.4" cy="237.2" r="2.9" fill="#9ebcda"/>
<circle cx="642.7" cy="280.3" r="3.1" fill="#f7fcfd"/>
<circle cx="649.1" cy="259.0" r="3.0" fill="#9ebcda"/>
<circle cx="728.9" cy="297.8" r="2.9" fill="#8c6bb1"/>
<circle cx="779.5" cy="272.2" r="2.0" fill="#f7fcfd"/>
<circle cx="603.6" cy="267.8" r="2.3" fill="#e0ecf4"/>
<circle cx="653.4" cy="287.0" r="2.3" fill="#bfd3e6"/>
<circle cx="718.6" cy="236.5" r="2.4" fill="#e0ecf4"/>
<circle cx="728.7" cy="226.9" r="2.1" fill="#f7fcfd"/>
<circle cx="760.6" cy="275.1" r="2.9" fill="#cccccc"/>
<circle cx="713.7" cy="210.6" r="2.1" fill="#f7fcfd"/>
<circle cx="708.7" cy="269.7" r="2.5" fill="#4d004b"/>
<circle cx="754.3" cy="267.5" r="2.9" fill="#810f7c"/>
<circle cx="714.7" cy="226.9" r="2.1" fill="#e0ecf4"/>
<circle cx="721.2" cy="286.8" r="2.7" fill="#4d004b"/>
<circle cx="642.1" cy="272.6" r="2.0" fill="#8c6bb1"/>
<circle cx="784.1" cy="278.6" r="2.0" fill="#e0ecf4"/>
<circle cx="647.6" cy="310.1" r="2.7" fill="#8c6bb1"/>
<circle cx="671.7" cy="266.4" r="3.2" fill="#88419d"/>
<circle cx="632.6" cy="263.6" r="2.1" fill="#8c96c6"/>
<circle cx="712.5" cy="242.5" r="2.2" fill="#9ebcda"/>
<circle cx="658.5" cy="291.1" r="2.2" fill="#88419d"/>
<circle cx="693.0" cy="275.4" r="3.4" fill="#9ebcda"/>
<circle cx="661.2" cy="243.3" r="2.1" fill="#f7fcfd"/>
<circle cx="655.9" cy="286.0" r="2.7" fill="#88419d"/>
<circle cx="630.2" cy="281.5" r="2.0" fill="#88419d"/>
<circle cx="790.2" cy="287.1" r="2.2" fill="#f7fcfd"/>
<circle cx="651.9" cy="278.3" r="2.4" fill="#8c96c6"/>
<circle cx="708.4" cy="274.0" r="3.3" fill="#88419d"/>
<circle cx="666.5" cy="256.5" r="2.7" fill="#8c96c6"/>
<circle cx="663.7" cy="263.0" r="2.2" fill="#8c6bb1"/>
<circle cx="706.8" cy="292.7" r="2.5" fill="#810f7c"/>
<circle cx="782.9" cy="280.6" r="2.6" fill="#bfd3e6"/>
<circle cx="726.1" cy="275.2" r="2.3" fill="#810f7c"/>
<circle cx="702.2" cy="260.5" r="2.3" fill="#4d004b"/>
<circle cx="783.7" cy="273.9" r="2.0" fill="#bfd3e6"/>
<circle cx="735.0" cy="234.0" r="2.4" fill="#f7fcfd"/>
<circle cx="740.9" cy="296.2" r="3.4" fill="#4d004b"/>
<circle cx="718.9" cy="204.5" r="1.9" fill="#9ebcda"/>
<circle cx="675.3" cy="240.2" r="2.9" fill="#bfd3e6"/>
<circle cx="663.2" cy="271.9" r="3.0" fill="#cccccc"/>
<circle cx="756.4" cy="276.3" r="2.6" fill="#810f7c"/>
<circle cx="614.6" cy="266.1" r="2.8" fill="#bfd3e6"/>
<circle cx="602.4" cy="278.0" r="2.2" fill="#8c96c6"/>
<circle cx="753.9" cy="281.1" r="3.3" fill="#810f7c"/>
<circle cx="663.0" cy="258.8" r="2.9" fill="#8c96c6"/>
<circle cx="678.0" cy="251.7" r="2.5" fill="#cccccc"/>
<circle cx="627.3" cy="278.3" r="2.9" fill="#8c96c6"/>
<circle cx="606.6" cy="280.2" r="3.1" fill="#bfd3e6"/>
<circle cx="712.1" cy="273.1" r="2.4" fill="#bfd3e6"/>
<circle cx="768.3" cy="285.1" r="2.4" fill="#bfd3e6"/>
<circle cx="770.2" cy="282.3" r="2.3" fill="#cccccc"/>
<circle cx="760.2" cy="277.9" r="2.6" fill="#cccccc"/>
<circle cx="726.1" cy="206.2" r="2.2" fill="#e0ecf4"/>
<circle cx="650.4" cy="273.9" r="2.0" fill="#9ebcda"/>
<circle cx="722.6" cy="275.4" r="2.3" fill="#810f7c"/>
<circle cx="710.7" cy="237.7" r="2.7" fill="#cccccc"/>
<circle cx="720.9" cy="271.4" r="2.3" fill="#4d004b"/>
<circle cx="718.8" cy="259.2" r="3.0" fill="#bfd3e6"/>
<circle cx="659.8" cy="241.0" r="2.3" fill="#9ebcda"/>
<circle cx="724.6" cy="236.1" r="2.5" fill="#bfd3e6"/>
<circle cx="632.7" cy="291.9" r="2.6" fill="#9ebcda"/>
<circle cx="633.7" cy="298.8" r="2.0" fill="#4d004b"/>
<circle cx="706.1" cy="274.5" r="2.8" fill="#810f7c"/>
<circle cx="709.4" cy="283.2" r="3.5" fill="#88419d"/>
<circle cx="712.7" cy="207.3" r="2.0" fill="#f7fcfd"/>
<circle cx="676.2" cy="262.8" r="2.2" fill="#810f7c"/>
<circle cx="715.7" cy="228.6" r="2.3" fill="#f7fcfd"/>
<circle cx="622.2" cy="295.0" r="2.9" fill="#9ebcda"/>
<circle cx="716.1" cy="256.1" r="3.2" fill="#8c6bb1"/>
<circle cx="704.3" cy="264.6" r="3.1" fill="#88419d"/>
<circle cx="682.2" cy="250.9" r="2.7" fill="#8c96c6"/>
<circle cx="712.4" cy="269.2" r="3.2" fill="#810f7c"/>
<circle cx="603.2" cy="275.5" r="2.3" fill="#f7fcfd"/>
<circle cx="789.2" cy="284.9" r="2.8" fill="#f7fcfd"/>
<circle cx="683.3" cy="277.3" r="3.3" fill="#bfd3e6"/>
<circle cx="728.5" cy="231.0" r="2.1" fill="#f7fcfd"/>
<circle cx="739.6" cy="214.3" r="2.3" fill="#f7fcfd"/>
<circle cx="635.7" cy="302.3" r="2.1" fill="#8c96c6"/>
<circle cx="622.3" cy="272.8" r="2.6" fill="#e0ecf4"/>
<circle cx="675.4" cy="238.3" r="3.3" fill="#8c96c6"/>
<circle cx="643.6" cy="264.4" r="3.0" fill="#cccccc"/>
<circle cx="613.9" cy="275.8" r="2.1" fill="#8c96c6"/>
<circle cx="745.9" cy="277.0" r="2.5" fill="#88419d"/>
<circle cx="603.6" cy="273.3" r="2.3" fill="#8c6bb1"/>
<circle cx="681.3" cy="284.3" r="2.7" fill="#810f7c"/>
<circle cx="600.8" cy="263.2" r="2.3" fill="#9ebcda"/>
<circle cx="654.7" cy="279.0" r="3.0" fill="#9ebcda"/>
<circle cx="610.4" cy="267.3" r="3.1" fill="#9ebcda"/>
<circle cx="660.0" cy="260.0" r="2.6" fill="#f7fcfd"/>
<circle cx="711.2" cy="281.8" r="3.1" fill="#810f7c"/>
<circle cx="764.9" cy="276.6" r="2.5" fill="#9ebcda"/>
<circle cx="609.7" cy="279.1" r="2.7" fill="#bfd3e6"/>
<circle cx="642.4" cy="285.3" r="2.2" fill="#88419d"/>
<circle cx="723.4" cy="262.1" r="3.3" fill="#f7fcfd"/>
<circle cx="662.3" cy="245.1" r="3.9" fill="#cccccc"/>
<circle cx="648.7" cy="267.0" r="1.9" fill="#bfd3e6"/>
<circle cx="636.8" cy="297.6" r="2.4" fill="#9ebcda"/>
<circle cx="798.3" cy="268.6" r="2.3" fill="#bfd3e6"/>
<circle cx="656.3" cy="260.0" r="3.0" fill="#8c6bb1"/>
<circle cx="666.1" cy="270.3" r="2.7" fill="#cccccc"/>
<circle cx="699.7" cy="269.5" r="3.0" fill="#4d004b"/>
<circle cx="633.8" cy="289.5" r="2.1" fill="#bfd3e6"/>
<circle cx="659.4" cy="269.2" r="2.7" fill="#f7fcfd"/>
<circle cx="686.8" cy="283.2" r="3.4" fill="#4d004b"/>
<circle cx="624.7" cy="264.2" r="2.8" fill="#9ebcda"/>
<circle cx="719.9" cy="198.2" r="2.5" fill="#bfd3e6"/>
<circle cx="608.7" cy="282.3" r="2.2" fill="#f7fcfd"/>
<circle cx="710.4" cy="279.0" r="2.6" fill="#810f7c"/>
<circle cx="735.3" cy="292.5" r="2.3" fill="#4d004b"/>
<circle cx="792.2" cy="284.2" r="2.8" fill="#f7fcfd"/>
<circle cx="722.5" cy="255.4" r="2.3" fill="#8c6bb1"/>
<circle cx="646.0" cy="269.7" r="2.5" fill="#88419d"/>
<circle cx="728.7" cy="298.5" r="2.2" fill="#8c6bb1"/>
<circle cx="609.8" cy="283.3" r="2.6" fill="#8c96c6"/>
<circle cx="678.6" cy="250.2" r="2.9" fill="#bfd3e6"/>
<circle cx="612.2" cy="268.7" r="1.9" fill="#bfd3e6"/>
<circle cx="679.8" cy="258.0" r="2.8" fill="#f7fcfd"/>
<circle cx="710.5" cy="244.4" r="2.2" fill="#8c96c6"/>
<circle cx="709.3" cy="235.1" r="2.3" fill="#f7fcfd"/>
<circle cx="716.4" cy="231.8" r="2.5" fill="#bfd3e6"/>
<circle cx="667.5" cy="251.7" r="2.3" fill="#f7fcfd"/>
<circle cx="730.5" cy="272.6" r="3.4" fill="#8c96c6"/>
<circle cx="680.4" cy="262.3" r="2.1" fill="#88419d"/>
<circle cx="693.2" cy="268.2" r="2.7" fill="#8c96c6"/>
<circle cx="611.7" cy="268.0" r="2.6" fill="#8c6bb1"/>
<circle cx="742.8" cy="282.4" r="3.3" fill="#810f7c"/>
<circle cx="711.3" cy="253.9" r="2.7" fill="#8c6bb1"/>
<circle cx="771.2" cy="270.0" r="2.1" fill="#f7fcfd"/>
<circle cx="699.6" cy="237.4" r="2.4" fill="#9ebcda"/>
<circle cx="750.9" cy="267.2" r="2.3" fill="#8c6bb1"/>
<circle cx="648.2" cy="267.2" r="2.7" fill="#810f7c"/>
<circle cx="744.9" cy="278.9" r="2.8" fill="#810f7c"/>
<circle cx="640.4" cy="292.5" r="2.6" fill="#8c96c6"/>
<circle cx="616.5" cy="266.4" r="2.1" fill="#810f7c"/>
<circle cx="733.0" cy="279.7" r="2.5" fill="#8c6bb1"/>
<circle cx="719.0" cy="282.3" r="3.5" fill="#8c6bb1"/>
<circle cx="669.8" cy="257.2" r="2.4" fill="#810f7c"/>
<circle cx="654.2" cy="305.6" r="2.4" fill="#8c96c6"/>
<circle cx="683.5" cy="283.2" r="2.2" fill="#810f7c"/>
<circle cx="627.7" cy="297.0" r="2.7" fill="#88419d"/>
<circle cx="659.9" cy="254.0" r="2.5" fill="#88419d"/>
<circle cx="616.2" cy="271.7" r="3.0" fill="#bfd3e6"/>
<circle cx="730.0" cy="280.5" r="2.6" fill="#4d004b"/>
<circle cx="725.8" cy="293.6" r="2.1" fill="#88419d"/>
<circle cx="710.4" cy="215.9" r="2.4" fill="#f7fcfd"/>
<circle cx="788.5" cy="269.6" r="2.5" fill="#9ebcda"/>
<circle cx="677.3" cy="252.7" r="2.2" fill="#8c96c6"/>
<circle cx="636.9" cy="286.5" r="2.3" fill="#810f7c"/>
<circle cx="618.0" cy="280.5" r="2.5" fill="#e0ecf4"/>
<circle cx="746.1" cy="280.0" r="2.2" fill="#4d004b"/>
<circle cx="795.9" cy="275.0" r="2.7" fill="#bfd3e6"/>
<circle cx="655.6" cy="303.9" r="3.0" fill="#810f7c"/>
<circle cx="631.5" cy="288.6" r="2.5" fill="#8c96c6"/>
<circle cx="699.7" cy="280.3" r="2.3" fill="#8c6bb1"/>
<circle cx="665.3" cy="236.7" r="2.7" fill="#f7fcfd"/>
<circle cx="746.1" cy="285.0" r="3.4" fill="#810f7c"/>
<circle cx="668.3" cy="232.1" r="2.9" fill="#bfd3e6"/>
<circle cx="739.0" cy="257.0" r="2.4" fill="#8c6bb1"/>
<circle cx="747.4" cy="296.4" r="2.2" fill="#810f7c"/>
<circle cx="713.9" cy="265.6" r="2.2" fill="#88419d"/>
<circle cx="789.5" cy="281.5" r="2.4" fill="#9ebcda"/>
<circle cx="635.8" cy="270.0" r="2.4" fill="#8c96c6"/>
<circle cx="696.4" cy="233.0" r="3.6" fill="#cccccc"/>
<circle cx="601.2" cy="264.4" r="3.0" fill="#9ebcda"/>
<circle cx="711.7" cy="232.1" r="2.9" fill="#bfd3e6"/>
<circle cx="743.1" cy="292.0" r="2.6" fill="#88419d"/>
<circle cx="711.5" cy="243.3" r="3.1" fill="#cccccc"/>
<circle cx="672.2" cy="279.3" r="2.4" fill="#4d004b"/>
<circle cx="685.6" cy="277.9" r="2.5" fill="#f7fcfd"/>
<circle cx="715.1" cy="202.1" r="2.6" fill="#e0ecf4"/>
<circle cx="758.2" cy="285.7" r="2.4" fill="#8c6bb1"/>
<circle cx="744.7" cy="282.6" r="3.3" fill="#8c6bb1"/>
<circle cx="690.0" cy="260.3" r="3.4" fill="#4d004b"/>
<circle cx="665.9" cy="241.3" r="2.4" fill="#8c96c6"/>
<circle cx="706.3" cy="289.8" r="2.8" fill="#8c96c6"/>
<circle cx="699.4" cy="264.4" r="3.4" fill="#810f7c"/>
<circle cx="731.2" cy="263.9" r="3.1" fill="#4d004b"/>
<circle cx="725.5" cy="293.6" r="2.1" fill="#88419d"/>
<circle cx="683.5" cy="255.3" r="3.3" fill="#8c6bb1"/>
<circle cx="732.7" cy="228.4" r="3.0" fill="#cccccc"/>
<circle cx="753.0" cy="274.3" r="2.7" fill="#810f7c"/>
<circle cx="744.4" cy="294.4" r="2.3" fill="#4d004b"/>
<circle cx="660.5" cy="265.9" r="2.4" fill="#8c6bb1"/>
<circle cx="648.0" cy="288.0" r="2.5" fill="#9ebcda"/>
<circle cx="775.4" cy="281.1" r="2.8" fill="#bfd3e6"/>
<circle cx="644.0" cy="284.4" r="2.2" fill="#9ebcda"/>
<circle cx="690.0" cy="271.5" r="2.9" fill="#f7fcfd"/>
<circle cx="721.6" cy="291.5" r="3.1" fill="#88419d"/>
<circle cx="626.4" cy="260.0" r="2.8" fill="#9ebcda"/>
<circle cx="717.6" cy="250.8" r="2.6" fill="#8c6bb1"/>
<circle cx="736.0" cy="291.4" r="2.3" fill="#88419d"/>
<circle cx="709.9" cy="232.9" r="2.5" fill="#f7fcfd"/>
<circle cx="618.4" cy="267.8" r="2.5" fill="#8c96c6"/>
<circle cx="735.9" cy="265.8" r="3.3" fill="#4d004b"/>
<circle cx="766.3" cy="284.5" r="3.4" fill="#cccccc"/>
<circle cx="732.4" cy="260.8" r="3.0" fill="#4d004b"/>
<circle cx="756.8" cy="279.4" r="3.3" fill="#cccccc"/>
<circle cx="723.1" cy="211.6" r="2.6" fill="#cccccc"/>
<circle cx="743.2" cy="295.0" r="2.7" fill="#4d004b"/>
<circle cx="642.2" cy="300.1" r="2.0" fill="#8c96c6"/>
<circle cx="766.6" cy="285.2" r="2.3" fill="#f7fcfd"/>
<circle cx="787.4" cy="273.2" r="2.0" fill="#9ebcda"/>
<circle cx="613.6" cy="275.6" r="2.0" fill="#88419d"/>
<circle cx="739.3" cy="281.3" r="3.2" fill="#cccccc"/>
<circle cx="685.9" cy="275.6" r="2.2" fill="#810f7c"/>
<circle cx="670.4" cy="277.7" r="3.4" fill="#8c96c6"/>
<circle cx="679.2" cy="236.5" r="3.5" fill="#cccccc"/>
<circle cx="683.0" cy="250.1" r="2.2" fill="#8c6bb1"/>
<circle cx="721.4" cy="256.2" r="3.0" fill="#8c6bb1"/>
<circle cx="717.3" cy="279.3" r="2.2" fill="#4d004b"/>
<circle cx="722.9" cy="242.7" r="2.3" fill="#bfd3e6"/>
<circle cx="743.0" cy="261.4" r="2.6" fill="#9ebcda"/>
<circle cx="604.4" cy="268.3" r="2.8" fill="#9ebcda"/>
<circle cx="717.2" cy="271.8" r="2.1" fill="#88419d"/>
<circle cx="705.0" cy="230.0" r="3.4" fill="#cccccc"/>
<circle cx="641.1" cy="280.2" r="3.1" fill="#8c96c6"/>
<circle cx="734.0" cy="258.2" r="3.1" fill="#cccccc"/>
<circle cx="747.7" cy="275.7" r="3.3" fill="#8c6bb1"/>
<circle cx="701.7" cy="247.3" r="3.1" fill="#bfd3e6"/>
<circle cx="755.5" cy="290.2" r="3.3" fill="#8c96c6"/>
<circle cx="721.5" cy="208.4" r="2.3" fill="#e0ecf4"/>
<circle cx="652.7" cy="270.4" r="2.1" fill="#f7fcfd"/>
<circle cx="687.8" cy="242.0" r="2.1" fill="#8c96c6"/>
<circle cx="714.9" cy="235.8" r="3.0" fill="#8c96c6"/>
<circle cx="727.8" cy="205.9" r="2.4" fill="#e0ecf4"/>
<circle cx="649.5" cy="296.2" r="2.1" fill="#88419d"/>
<circle cx="705.6" cy="279.2" r="2.1" fill="#88419d"/>
<circle cx="664.6" cy="267.5" r="2.5" fill="#4d004b"/>
<circle cx="740.2" cy="274.7" r="3.1" fill="#810f7c"/>
<circle cx="678.2" cy="230.2" r="2.2" fill="#810f7c"/>
<circle cx="714.9" cy="203.8" r="2.1" fill="#f7fcfd"/>
<circle cx="665.3" cy="247.4" r="2.6" fill="#bfd3e6"/>
<circle cx="735.4" cy="256.0" r="2.7" fill="#8c6bb1"/>
<circle cx="650.6" cy="266.8" r="2.7" fill="#bfd3e6"/>
<circle cx="701.5" cy="258.3" r="2.4" fill="#e0ecf4"/>
<circle cx="687.9" cy="259.9" r="3.2" fill="#cccccc"/>
<circle cx="698.9" cy="227.7" r="3.2" fill="#9ebcda"/>
<circle cx="716.4" cy="286.0" r="2.4" fill="#4d004b"/>
<circle cx="649.4" cy="301.0" r="2.8" fill="#9ebcda"/>
<circle cx="656.5" cy="274.2" r="2.3" fill="#88419d"/>
<circle cx="723.0" cy="208.3" r="2.3" fill="#e0ecf4"/>
<circle cx="646.7" cy="273.5" r="2.4" fill="#8c6bb1"/>
<circle cx="734.0" cy="229.2" r="2.4" fill="#f7fcfd"/>
<circle cx="623.3" cy="287.8" r="2.2" fill="#8c96c6"/>
<circle cx="673.9" cy="274.7" r="3.2" fill="#8c6bb1"/>
<circle cx="657.3" cy="297.3" r="2.4" fill="#8c96c6"/>
<circle cx="673.9" cy="245.8" r="2.9" fill="#bfd3e6"/>
<circle cx="721.5" cy="249.9" r="2.9" fill="#810f7c"/>
<circle cx="617.4" cy="278.6" r="2.2" fill="#8c6bb1"/>
<circle cx="686.3" cy="274.7" r="2.2" fill="#810f7c"/>
<circle cx="625.9" cy="289.1" r="3.0" fill="#88419d"/>
<circle cx="645.3" cy="292.4" r="2.7" fill="#810f7c"/>
<circle cx="633.7" cy="277.4" r="2.9" fill="#88419d"/>
<circle cx="607.2" cy="281.6" r="2.2" fill="#9ebcda"/>
<circle cx="656.8" cy="252.7" r="2.2" fill="#f7fcfd"/>
<circle cx="608.4" cy="260.7" r="2.1" fill="#8c6bb1"/>
<circle cx="638.6" cy="299.8" r="2.3" fill="#9ebcda"/>
<circle cx="714.4" cy="254.8" r="3.0" fill="#4d004b"/>
<circle cx="745.1" cy="297.0" r="2.7" fill="#88419d"/>
<circle cx="599.7" cy="266.6" r="2.3" fill="#8c6bb1"/>
<circle cx="794.7" cy="265.4" r="2.1" fill="#e0ecf4"/>
<circle cx="744.1" cy="264.5" r="2.3" fill="#810f7c"/>
<circle cx="653.4" cy="258.0" r="2.0" fill="#810f7c"/>
<circle cx="736.2" cy="260.5" r="2.2" fill="#4d004b"/>
<circle cx="725.7" cy="204.8" r="1.8" fill="#f7fcfd"/>
<circle cx="675.2" cy="268.5" r="3.1" fill="#8c6bb1"/>
<circle cx="717.9" cy="241.4" r="3.0" fill="#cccccc"/>
<circle cx="623.5" cy="267.9" r="2.2" fill="#cccccc"/>
<circle cx="689.3" cy="264.4" r="2.5" fill="#4d004b"/>
<circle cx="750.2" cy="284.8" r="3.9" fill="#cccccc"/>
<circle cx="684.8" cy="260.9" r="3.0" fill="#810f7c"/>
<circle cx="754.8" cy="270.3" r="3.6" fill="#cccccc"/>
<circle cx="725.0" cy="275.0" r="3.2" fill="#cccccc"/>
<circle cx="690.2" cy="281.9" r="2.5" fill="#4d004b"/>
<circle cx="688.8" cy="237.1" r="2.9" fill="#bfd3e6"/>
<circle cx="636.2" cy="298.4" r="3.0" fill="#8c6bb1"/>
<circle cx="725.4" cy="229.5" r="2.3" fill="#f7fcfd"/>
<circle cx="650.5" cy="269.2" r="1.9" fill="#8c96c6"/>
<circle cx="658.7" cy="265.3" r="2.7" fill="#bfd3e6"/>
<circle cx="717.9" cy="280.4" r="3.5" fill="#810f7c"/>
<circle cx="665.0" cy="280.8" r="2.2" fill="#4d004b"/>
<circle cx="694.1" cy="273.3" r="3.2" fill="#4d004b"/>
<circle cx="685.1" cy="249.5" r="2.1" fill="#88419d"/>
<circle cx="735.2" cy="287.8" r="3.1" fill="#8c96c6"/>
<circle cx="722.2" cy="195.9" r="2.2" fill="#f7fcfd"/>
<circle cx="704.5" cy="236.5" r="3.2" fill="#9ebcda"/>
<circle cx="696.7" cy="267.7" r="3.0" fill="#88419d"/>
<circle cx="711.8" cy="210.8" r="1.8" fill="#e0ecf4"/>
<circle cx="722.8" cy="283.9" r="2.6" fill="#4d004b"/>
<circle cx="699.8" cy="276.0" r="3.8" fill="#cccccc"/>
<circle cx="740.3" cy="289.2" r="2.5" fill="#4d004b"/>
<circle cx="719.1" cy="269.0" r="2.4" fill="#4d004b"/>
<circle cx="746.2" cy="294.8" r="3.5" fill="#8c96c6"/>
<circle cx="700.0" cy="286.1" r="2.5" fill="#4d004b"/>
<circle cx="698.7" cy="289.0" r="3.5" fill="#810f7c"/>
<circle cx="710.4" cy="267.6" r="3.3" fill="#810f7c"/>
<circle cx="720.4" cy="278.5" r="2.8" fill="#4d004b"/>
<circle cx="728.7" cy="279.3" r="2.6" fill="#88419d"/>
<circle cx="741.8" cy="284.4" r="2.9" fill="#4d004b"/>
<circle cx="720.6" cy="273.2" r="3.3" fill="#810f7c"/>
<circle cx="702.0" cy="276.1" r="2.7" fill="#8c6bb1"/>
<circle cx="682.2" cy="277.7" r="2.5" fill="#4d004b"/>
<circle cx="740.8" cy="275.3" r="2.8" fill="#4d004b"/>
<circle cx="729.9" cy="288.6" r="3.3" fill="#810f7c"/>
<circle cx="705.7" cy="281.1" r="3.5" fill="#810f7c"/>
<circle cx="699.1" cy="277.7" r="3.4" fill="#810f7c"/>
<circle cx="719.5" cy="274.9" r="2.9" fill="#4d004b"/>
<circle cx="742.2" cy="288.7" r="3.3" fill="#810f7c"/>
<circle cx="743.3" cy="277.1" r="3.0" fill="#4d004b"/>
<circle cx="736.5" cy="279.9" r="3.3" fill="#4d004b"/>
<circle cx="692.8" cy="279.1" r="3.4" fill="#8c96c6"/>
<circle cx="706.3" cy="275.4" r="2.7" fill="#4d004b"/>
<circle cx="692.2" cy="277.6" r="3.3" fill="#4d004b"/>
<circle cx="731.1" cy="287.4" r="2.6" fill="#88419d"/>
<circle cx="718.7" cy="276.9" r="2.7" fill="#4d004b"/>
<circle cx="685.6" cy="279.5" r="3.1" fill="#810f7c"/>
<circle cx="685.4" cy="275.3" r="2.6" fill="#810f7c"/>
<circle cx="743.6" cy="277.0" r="3.5" fill="#810f7c"/>
<circle cx="742.7" cy="287.2" r="2.6" fill="#4d004b"/>
<circle cx="734.2" cy="275.2" r="2.7" fill="#4d004b"/>
<circle cx="729.1" cy="278.2" r="2.8" fill="#810f7c"/>
<circle cx="736.8" cy="290.5" r="2.7" fill="#88419d"/>
<circle cx="707.9" cy="273.9" r="2.4" fill="#4d004b"/>
<circle cx="719.7" cy="266.9" r="3.0" fill="#810f7c"/>
<circle cx="748.6" cy="289.2" r="2.7" fill="#4d004b"/>
<circle cx="694.6" cy="285.5" r="3.0" fill="#4d004b"/>
<circle cx="733.0" cy="274.3" r="3.4" fill="#4d004b"/>
<circle cx="703.9" cy="281.1" r="3.4" fill="#4d004b"/>
<circle cx="731.8" cy="281.5" r="3.5" fill="#88419d"/>
<circle cx="752.2" cy="288.8" r="2.8" fill="#8c6bb1"/>
<circle cx="704.7" cy="265.2" r="2.9" fill="#810f7c"/>
<circle cx="749.5" cy="282.5" r="2.8" fill="#810f7c"/>
<circle cx="715.9" cy="268.6" r="3.2" fill="#4d004b"/>
<circle cx="750.1" cy="292.1" r="3.2" fill="#4d004b"/>
<circle cx="707.4" cy="264.8" r="3.2" fill="#4d004b"/>
<circle cx="684.4" cy="281.2" r="2.7" fill="#810f7c"/>
<circle cx="725.3" cy="288.3" r="2.5" fill="#4d004b"/>
<circle cx="690.2" cy="268.5" r="3.4" fill="#88419d"/>
<circle cx="706.9" cy="279.7" r="3.0" fill="#88419d"/>
<circle cx="684.0" cy="279.9" r="2.8" fill="#4d004b"/>
<circle cx="726.6" cy="280.6" r="3.3" fill="#4d004b"/>
<circle cx="750.2" cy="292.0" r="2.6" fill="#4d004b"/>
<circle cx="708.5" cy="282.8" r="2.6" fill="#4d004b"/>
<circle cx="729.3" cy="268.1" r="2.6" fill="#4d004b"/>
<circle cx="710.8" cy="266.2" r="2.8" fill="#88419d"/>
<circle cx="699.9" cy="265.9" r="2.6" fill="#88419d"/>
<circle cx="728.0" cy="272.8" r="3.1" fill="#810f7c"/>
<circle cx="722.0" cy="266.9" r="2.7" fill="#4d004b"/>
<circle cx="728.9" cy="268.5" r="3.4" fill="#8c6bb1"/>
<circle cx="706.6" cy="285.4" r="2.4" fill="#4d004b"/>
<circle cx="718.9" cy="283.3" r="3.1" fill="#4d004b"/>
<circle cx="741.1" cy="285.6" r="3.4" fill="#8c6bb1"/>
<circle cx="747.8" cy="292.1" r="2.4" fill="#4d004b"/>
<circle cx="704.4" cy="269.7" r="2.5" fill="#4d004b"/>
<circle cx="730.1" cy="275.0" r="3.0" fill="#4d004b"/>
<circle cx="735.8" cy="282.8" r="3.4" fill="#88419d"/>
<circle cx="726.3" cy="279.2" r="3.3" fill="#810f7c"/>
<circle cx="692.8" cy="275.3" r="3.6" fill="#810f7c"/>
<circle cx="752.3" cy="285.9" r="3.3" fill="#810f7c"/>
<circle cx="743.0" cy="279.0" r="2.7" fill="#4d004b"/>
<circle cx="718.8" cy="285.6" r="2.6" fill="#810f7c"/>
<circle cx="711.2" cy="268.1" r="3.2" fill="#4d004b"/>
<circle cx="688.6" cy="268.4" r="2.6" fill="#4d004b"/>
<circle cx="728.5" cy="282.9" r="3.2" fill="#4d004b"/>
<circle cx="687.4" cy="281.3" r="2.5" fill="#810f7c"/>
<circle cx="730.8" cy="286.3" r="3.6" fill="#810f7c"/>
<circle cx="720.8" cy="287.8" r="3.3" fill="#4d004b"/>
<circle cx="717.6" cy="266.1" r="2.2" fill="#f7fcfd"/>
<circle cx="695.8" cy="274.6" r="2.3" fill="#f7fcfd"/>
<circle cx="704.0" cy="273.9" r="2.2" fill="#e0ecf4"/>
<circle cx="704.7" cy="273.1" r="2.6" fill="#cccccc"/>
<circle cx="730.8" cy="275.0" r="2.6" fill="#f7fcfd"/>
<circle cx="702.5" cy="272.0" r="2.4" fill="#8c96c6"/>
<circle cx="715.3" cy="268.5" r="2.1" fill="#f7fcfd"/>
<circle cx="728.9" cy="297.5" r="3.0" fill="#cccccc"/>
<circle cx="708.0" cy="291.3" r="2.0" fill="#bfd3e6"/>
<circle cx="725.8" cy="267.5" r="2.5" fill="#9ebcda"/>
<circle cx="750.2" cy="270.9" r="3.2" fill="#bfd3e6"/>
<circle cx="724.2" cy="258.8" r="2.7" fill="#4d004b"/>
<circle cx="729.1" cy="258.3" r="2.6" fill="#8c6bb1"/>
<circle cx="727.6" cy="266.3" r="3.0" fill="#8c6bb1"/>
<circle cx="748.0" cy="269.3" r="3.0" fill="#8c96c6"/>
<circle cx="744.7" cy="271.6" r="2.5" fill="#8c96c6"/>
<circle cx="731.3" cy="265.9" r="2.5" fill="#810f7c"/>
<circle cx="746.0" cy="269.7" r="2.6" fill="#88419d"/>
<circle cx="735.6" cy="268.0" r="2.7" fill="#88419d"/>
<circle cx="734.9" cy="261.2" r="3.0" fill="#8c6bb1"/>
<circle cx="750.0" cy="264.4" r="2.5" fill="#8c6bb1"/>
<circle cx="722.8" cy="258.2" r="2.8" fill="#88419d"/>
<circle cx="750.6" cy="273.1" r="2.7" fill="#4d004b"/>
<circle cx="738.0" cy="260.7" r="2.6" fill="#8c96c6"/>
<circle cx="740.5" cy="262.6" r="2.4" fill="#8c96c6"/>
<circle cx="737.4" cy="260.4" r="3.0" fill="#bfd3e6"/>
<circle cx="738.5" cy="266.2" r="2.9" fill="#88419d"/>
<circle cx="731.3" cy="266.7" r="2.4" fill="#8c96c6"/>
<circle cx="724.1" cy="259.0" r="2.8" fill="#4d004b"/>
<circle cx="738.8" cy="263.1" r="2.6" fill="#8c6bb1"/>
<circle cx="746.8" cy="266.8" r="2.8" fill="#8c6bb1"/>
<circle cx="732.5" cy="267.3" r="3.1" fill="#cccccc"/>
<circle cx="783.5" cy="282.5" r="3.0" fill="#810f7c"/>
<circle cx="789.5" cy="283.8" r="3.1" fill="#810f7c"/>
<circle cx="780.0" cy="283.5" r="2.6" fill="#8c6bb1"/>
<circle cx="753.5" cy="262.0" r="2.7" fill="#8c6bb1"/>
<circle cx="777.5" cy="170.3" r="2.1" fill="#f7fcfd"/>
<circle cx="786.3" cy="175.2" r="2.1" fill="#f7fcfd"/>
<circle cx="786.2" cy="195.6" r="2.5" fill="#f7fcfd"/>
<circle cx="786.2" cy="200.4" r="2.5" fill="#e0ecf4"/>
<circle cx="786.2" cy="204.8" r="2.5" fill="#f7fcfd"/>
<circle cx="766.6" cy="215.2" r="2.3" fill="#f7fcfd"/>
<circle cx="789.9" cy="239.5" r="2.0" fill="#f7fcfd"/>
<circle cx="680.6" cy="195.5" r="2.0" fill="#f7fcfd"/>
<circle cx="688.5" cy="203.4" r="3.0" fill="#810f7c"/>
<circle cx="721.2" cy="196.8" r="4.0" fill="#cccccc"/>
<circle cx="705.0" cy="206.0" r="3.6" fill="#cccccc"/>
<circle cx="708.0" cy="204.5" r="2.2" fill="#f7fcfd"/>
<circle cx="716.0" cy="199.0" r="2.0" fill="#f7fcfd"/>
<circle cx="721.0" cy="203.0" r="3.4" fill="#cccccc"/>
<circle cx="737.5" cy="227.0" r="2.6" fill="#9ebcda"/>
<circle cx="736.0" cy="230.0" r="2.4" fill="#bfd3e6"/>
<circle cx="722.5" cy="242.0" r="2.6" fill="#9ebcda"/>
<circle cx="757.0" cy="259.0" r="3.0" fill="#cccccc"/>
<circle cx="753.0" cy="257.0" r="2.4" fill="#cccccc"/>
<circle cx="760.0" cy="262.0" r="2.0" fill="#f7fcfd"/>
<circle cx="779.5" cy="255.0" r="2.0" fill="#f7fcfd"/>
<circle cx="775.0" cy="258.0" r="2.0" fill="#f7fcfd"/>
<circle cx="738.0" cy="250.0" r="1.9" fill="#f7fcfd"/>
<circle cx="733.0" cy="252.0" r="1.9" fill="#f7fcfd"/>
<circle cx="772.0" cy="262.0" r="3.6" fill="#cccccc"/>
<circle cx="778.0" cy="268.0" r="3.8" fill="#cccccc"/>
<circle cx="787.0" cy="272.0" r="3.6" fill="#cccccc"/>
<circle cx="797.0" cy="266.0" r="3.4" fill="#cccccc"/>
<circle cx="790.0" cy="258.0" r="2.6" fill="#9ebcda"/>
<circle cx="798.0" cy="261.5" r="3.0" fill="#cccccc"/>
<circle cx="763.0" cy="271.0" r="3.0" fill="#cccccc"/>
<circle cx="790.0" cy="276.0" r="2.4" fill="#8c96c6"/>
<circle cx="640.0" cy="257.0" r="3.2" fill="#cccccc"/>
<circle cx="614.0" cy="267.0" r="3.0" fill="#cccccc"/>
<circle cx="628.0" cy="293.0" r="3.2" fill="#cccccc"/>
<circle cx="612.0" cy="283.0" r="3.0" fill="#cccccc"/>
<circle cx="606.0" cy="278.0" r="3.6" fill="#4d004b"/>
<circle cx="625.0" cy="270.0" r="3.4" fill="#4d004b"/>
<circle cx="622.0" cy="292.0" r="3.2" fill="#4d004b"/>
<circle cx="636.0" cy="262.0" r="3.0" fill="#810f7c"/>
<circle cx="630.0" cy="263.0" r="3.2" fill="#810f7c"/>
<circle cx="601.0" cy="281.0" r="2.4" fill="#8c96c6"/>
<circle cx="604.0" cy="285.0" r="2.5" fill="#9ebcda"/>
<circle cx="608.0" cy="289.0" r="2.4" fill="#88419d"/>
<circle cx="612.0" cy="292.5" r="2.5" fill="#bfd3e6"/>
<circle cx="617.0" cy="295.5" r="2.4" fill="#8c96c6"/>
<circle cx="622.0" cy="298.5" r="2.5" fill="#9ebcda"/>
<circle cx="627.0" cy="301.5" r="2.4" fill="#8c6bb1"/>
<circle cx="631.0" cy="304.0" r="2.5" fill="#bfd3e6"/>
<circle cx="636.0" cy="306.5" r="2.4" fill="#8c96c6"/>
<circle cx="641.0" cy="309.5" r="2.5" fill="#9ebcda"/>
<circle cx="646.0" cy="312.5" r="2.6" fill="#bfd3e6"/>
<circle cx="650.0" cy="313.5" r="2.5" fill="#9ebcda"/>
<circle cx="653.0" cy="309.0" r="2.4" fill="#8c96c6"/>
<circle cx="599.0" cy="270.0" r="2.4" fill="#8c6bb1"/>
<circle cx="599.5" cy="275.0" r="2.4" fill="#9ebcda"/>
<circle cx="663.0" cy="243.0" r="3.4" fill="#cccccc"/>
<circle cx="668.0" cy="240.0" r="2.8" fill="#cccccc"/>
<circle cx="677.5" cy="263.0" r="3.4" fill="#cccccc"/>
<circle cx="671.0" cy="246.0" r="2.6" fill="#cccccc"/>
</g>
<text x="633.6" y="143.2" font-size="6.3" fill="#8090ac" letter-spacing="0.55" font-weight="normal">Tamanrasset</text>
<circle cx="677.3" cy="141.2" r="0.85" fill="#8090ac"/>
<text x="703" y="310.4" font-size="6.3" fill="#8090ac" letter-spacing="0.45" font-weight="normal">Kano</text>
<circle cx="722.8" cy="308.4" r="0.85" fill="#8090ac"/>
<text x="780" y="310" font-size="6.3" fill="#8090ac" letter-spacing="0.42" font-weight="normal">N'Djamena</text>
<circle cx="818.2" cy="307.8" r="0.85" fill="#8090ac"/>
<text x="780.4" y="332.2" font-size="6.3" fill="#8090ac" letter-spacing="0.45" font-weight="normal">Maroua</text>
<circle cx="806.9" cy="330.2" r="0.85" fill="#8090ac"/>
<path d="M805.5 294 q0.5 -2.4 2.6 -2.6 q2.2 0.2 2.4 2.4 l-0.6 1.2 l-1 -1 l-1.2 1.4 l-1 -1.2 z" fill="#c3cfe0"/>
<text x="568.7" y="306.3" font-size="7.2" fill="#a7b3c5" letter-spacing="0.85" font-weight="normal">KINA</text>
<text x="563.6" y="314.4" font-size="7.2" fill="#a7b3c5" letter-spacing="0.85" font-weight="normal">ASO</text>
<text x="738" y="223.3" font-size="6.8" fill="#b8c0cc" letter-spacing="0.5" font-weight="normal">ER</text>
<text x="664" y="296.5" font-size="6.2" fill="#8090ac" letter-spacing="0.25" font-weight="normal">oto</text>
<circle cx="675.6" cy="294.6" r="0.85" fill="#8090ac"/>
<text x="567.8" y="241.5" font-size="6.2" fill="#b8c0cc" letter-spacing="0" font-weight="normal">J</text>
<rect x="573.6" y="110.3" width="17.8" height="17.5" rx="2.2" fill="#fff" stroke="#c9ccd1" stroke-width="0.6"/>
<rect x="577" y="114.30" width="2.9" height="2.5" fill="#8f3d1e"/>
<rect x="581.1" y="114.80" width="5.5" height="1.55" fill="#222"/>
<rect x="577" y="117.70" width="2.9" height="2.5" fill="#e0651f"/>
<rect x="581.1" y="118.20" width="5.5" height="1.55" fill="#222"/>
<rect x="577" y="121.10" width="2.9" height="2.5" fill="#f9a04a"/>
<rect x="581.1" y="121.60" width="5.5" height="1.55" fill="#222"/>
</svg>
</div></div></body></html>
